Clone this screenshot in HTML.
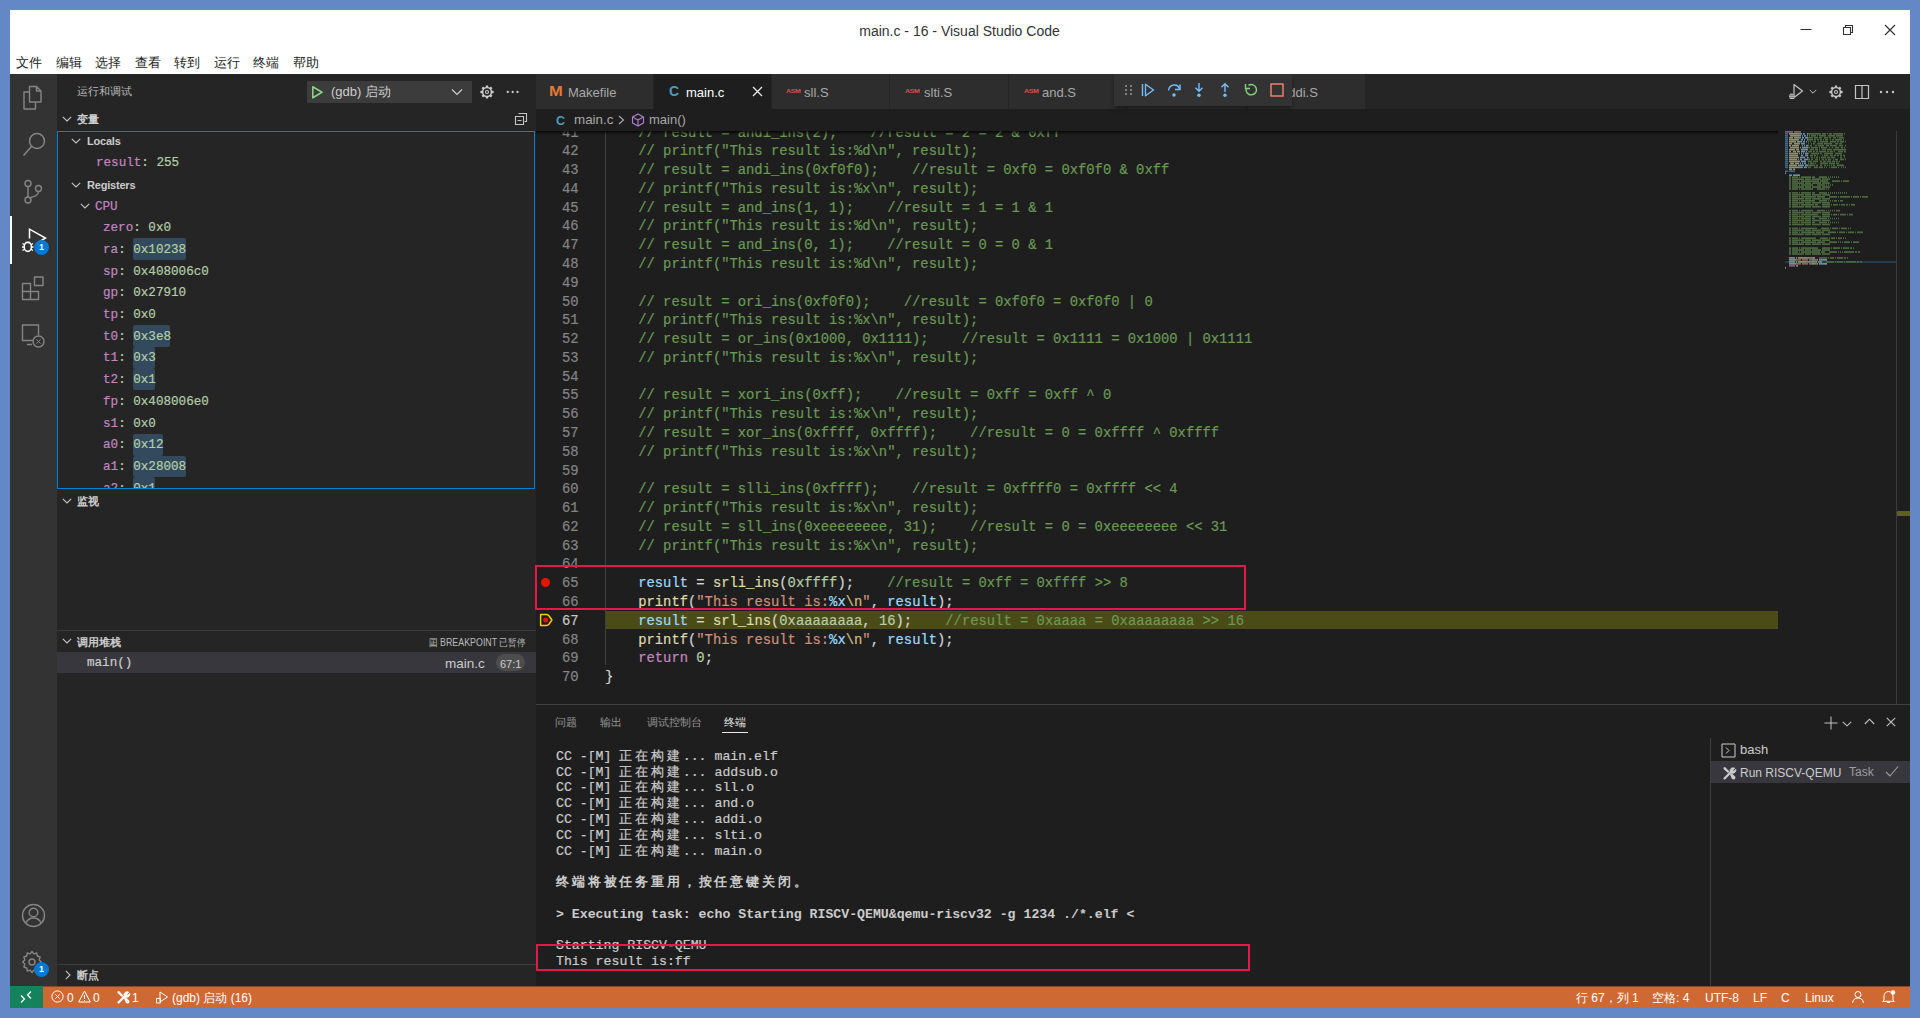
<!DOCTYPE html><html><head><meta charset="utf-8"><style>
*{box-sizing:border-box;margin:0;padding:0}
html,body{width:1920px;height:1018px;overflow:hidden}
body{background:#6388c5;font-family:"Liberation Sans",sans-serif;position:relative}
.a{position:absolute}
.ui{font-family:"Liberation Sans",sans-serif}
.mono{font-family:"Liberation Mono",monospace;-webkit-text-stroke:0.2px currentColor}
.nw{white-space:pre}
svg{display:block;overflow:visible}
</style></head><body><div class="a" style="left:10px;top:10px;width:1900px;height:64px;background:#ffffff"></div>
<div class="a ui nw" style="left:0;top:21.5px;width:1919px;text-align:center;font-size:14px;color:#333;line-height:18px">main.c - 16 - Visual Studio Code</div>
<svg class="a" style="left:1800px;top:24px" width="12" height="12"><path d="M0.5 5.5H11.5" stroke="#333" stroke-width="1.1"/></svg>
<svg class="a" style="left:1842px;top:24px" width="12" height="12"><path d="M1.5 3.5h7v7h-7z M3.5 3.5v-2h7v7h-2" fill="none" stroke="#333" stroke-width="1.1"/></svg>
<svg class="a" style="left:1884px;top:24px" width="12" height="12"><path d="M1 1L11 11M11 1L1 11" stroke="#333" stroke-width="1.2"/></svg>
<div class="a ui nw" style="left:16.3px;top:55px;font-size:13.4px;line-height:16px;color:#222">文件</div>
<div class="a ui nw" style="left:55.8px;top:55px;font-size:13.4px;line-height:16px;color:#222">编辑</div>
<div class="a ui nw" style="left:95.3px;top:55px;font-size:13.4px;line-height:16px;color:#222">选择</div>
<div class="a ui nw" style="left:134.8px;top:55px;font-size:13.4px;line-height:16px;color:#222">查看</div>
<div class="a ui nw" style="left:174.3px;top:55px;font-size:13.4px;line-height:16px;color:#222">转到</div>
<div class="a ui nw" style="left:213.8px;top:55px;font-size:13.4px;line-height:16px;color:#222">运行</div>
<div class="a ui nw" style="left:253.3px;top:55px;font-size:13.4px;line-height:16px;color:#222">终端</div>
<div class="a ui nw" style="left:292.8px;top:55px;font-size:13.4px;line-height:16px;color:#222">帮助</div>
<div class="a" style="left:10px;top:74px;width:47px;height:912px;background:#333333"></div>
<div class="a" style="left:10px;top:216px;width:2px;height:48px;background:#ffffff"></div>
<div class="a" style="left:57px;top:74px;width:479px;height:912px;background:#252526"></div>
<div class="a ui nw" style="left:77px;top:84px;font-size:11px;line-height:14px;color:#bbbbbb">运行和调试</div>
<div class="a" style="left:307px;top:81px;width:165px;height:22px;background:#3c3c3c"></div>
<svg class="a" style="left:310px;top:84px" width="14" height="16"><path d="M2.8 2.8L12 8.3L2.8 13.8Z" fill="none" stroke="#89d185" stroke-width="1.6" stroke-linejoin="round"/></svg>
<div class="a ui nw" style="left:331px;top:84px;font-size:13px;line-height:16px;color:#cccccc">(gdb) 启动</div>
<svg class="a" style="left:451px;top:88px" width="12" height="8"><path d="M1 1.5L6 6.5L11 1.5" fill="none" stroke="#cccccc" stroke-width="1.2"/></svg>
<svg class="a" style="left:479.2px;top:84px" width="16" height="16"><circle cx="8" cy="8" r="4.4" fill="none" stroke="#cccccc" stroke-width="1.5"/><path d="M12.60 8.00L14.60 8.00 M11.25 11.25L12.67 12.67 M8.00 12.60L8.00 14.60 M4.75 11.25L3.33 12.67 M3.40 8.00L1.40 8.00 M4.75 4.75L3.33 3.33 M8.00 3.40L8.00 1.40 M11.25 4.75L12.67 3.33" stroke="#cccccc" stroke-width="2.3"/><circle cx="8" cy="8" r="1.5" fill="none" stroke="#cccccc" stroke-width="1.1"/></svg>
<svg class="a" style="left:505px;top:90px" width="16" height="4"><circle cx="2.8" cy="2" r="1.15" fill="#ccc"/><circle cx="7.7" cy="2" r="1.15" fill="#ccc"/><circle cx="12.5" cy="2" r="1.15" fill="#ccc"/></svg>
<svg class="a" style="left:62px;top:116px" width="10" height="6"><path d="M0.8 0.8L5 5L9.2 0.8" fill="none" stroke="#c5c5c5" stroke-width="1.1"/></svg>
<div class="a ui nw" style="left:77px;top:112px;font-size:11px;line-height:14px;color:#cccccc;font-weight:bold">变量</div>
<svg class="a" style="left:514px;top:112px" width="14" height="14"><path d="M4.5 1.5h8v8h-2 M1.5 4.5h8v8h-8z M3.5 8.5h4" fill="none" stroke="#c5c5c5" stroke-width="1.1"/></svg>
<div class="a" style="left:57px;top:131px;width:478px;height:358px;border:1px solid #007fd4"></div>
<svg class="a" style="left:71px;top:138px" width="10" height="6"><path d="M0.8 0.8L5 5L9.2 0.8" fill="none" stroke="#c5c5c5" stroke-width="1.1"/></svg>
<div class="a ui nw" style="left:87px;top:134px;font-size:11px;letter-spacing:-0.2px;line-height:14px;color:#cccccc;font-weight:bold">Locals</div>
<div class="a mono nw" style="left:96px;top:156px;font-size:12.6px;line-height:15px;color:#b5cea8"><span style="color:#c586c0">result</span>: 255</div>
<svg class="a" style="left:71px;top:182px" width="10" height="6"><path d="M0.8 0.8L5 5L9.2 0.8" fill="none" stroke="#c5c5c5" stroke-width="1.1"/></svg>
<div class="a ui nw" style="left:87px;top:177.5px;font-size:11px;letter-spacing:-0.2px;line-height:14px;color:#cccccc;font-weight:bold">Registers</div>
<svg class="a" style="left:80px;top:203px" width="10" height="6"><path d="M0.8 0.8L5 5L9.2 0.8" fill="none" stroke="#c5c5c5" stroke-width="1.1"/></svg>
<div class="a mono nw" style="left:95px;top:199.5px;font-size:12.6px;line-height:15px;color:#c586c0">CPU</div>
<div class="a" style="left:58px;top:131px;width:476px;height:357px;overflow:hidden">
<div class="a mono nw" style="left:45px;top:90.0px;font-size:12.6px;line-height:15px;color:#b5cea8"><span style="color:#c586c0">zero</span>: 0x0</div>
<div class="a" style="left:74.7px;top:107.2px;width:52.9px;height:21.8px;background:#33495d;border-radius:2px"></div>
<div class="a mono nw" style="left:45px;top:111.7px;font-size:12.6px;line-height:15px;color:#b5cea8"><span style="color:#c586c0">ra</span>: 0x10238</div>
<div class="a mono nw" style="left:45px;top:133.5px;font-size:12.6px;line-height:15px;color:#b5cea8"><span style="color:#c586c0">sp</span>: 0x408006c0</div>
<div class="a mono nw" style="left:45px;top:155.2px;font-size:12.6px;line-height:15px;color:#b5cea8"><span style="color:#c586c0">gp</span>: 0x27910</div>
<div class="a mono nw" style="left:45px;top:176.9px;font-size:12.6px;line-height:15px;color:#b5cea8"><span style="color:#c586c0">tp</span>: 0x0</div>
<div class="a" style="left:74.7px;top:194.1px;width:37.8px;height:21.8px;background:#33495d;border-radius:2px"></div>
<div class="a mono nw" style="left:45px;top:198.6px;font-size:12.6px;line-height:15px;color:#b5cea8"><span style="color:#c586c0">t0</span>: 0x3e8</div>
<div class="a" style="left:74.7px;top:215.9px;width:22.7px;height:21.8px;background:#33495d;border-radius:2px"></div>
<div class="a mono nw" style="left:45px;top:220.4px;font-size:12.6px;line-height:15px;color:#b5cea8"><span style="color:#c586c0">t1</span>: 0x3</div>
<div class="a" style="left:74.7px;top:237.6px;width:22.7px;height:21.8px;background:#33495d;border-radius:2px"></div>
<div class="a mono nw" style="left:45px;top:242.1px;font-size:12.6px;line-height:15px;color:#b5cea8"><span style="color:#c586c0">t2</span>: 0x1</div>
<div class="a mono nw" style="left:45px;top:263.8px;font-size:12.6px;line-height:15px;color:#b5cea8"><span style="color:#c586c0">fp</span>: 0x408006e0</div>
<div class="a mono nw" style="left:45px;top:285.6px;font-size:12.6px;line-height:15px;color:#b5cea8"><span style="color:#c586c0">s1</span>: 0x0</div>
<div class="a" style="left:74.7px;top:302.8px;width:30.2px;height:21.8px;background:#33495d;border-radius:2px"></div>
<div class="a mono nw" style="left:45px;top:307.3px;font-size:12.6px;line-height:15px;color:#b5cea8"><span style="color:#c586c0">a0</span>: 0x12</div>
<div class="a" style="left:74.7px;top:324.5px;width:52.9px;height:21.8px;background:#33495d;border-radius:2px"></div>
<div class="a mono nw" style="left:45px;top:329.0px;font-size:12.6px;line-height:15px;color:#b5cea8"><span style="color:#c586c0">a1</span>: 0x28008</div>
<div class="a" style="left:74.7px;top:346.3px;width:22.7px;height:21.8px;background:#33495d;border-radius:2px"></div>
<div class="a mono nw" style="left:45px;top:350.8px;font-size:12.6px;line-height:15px;color:#b5cea8"><span style="color:#c586c0">a2</span>: 0x1</div>
</div>
<svg class="a" style="left:62px;top:498px" width="10" height="6"><path d="M0.8 0.8L5 5L9.2 0.8" fill="none" stroke="#c5c5c5" stroke-width="1.1"/></svg>
<div class="a ui nw" style="left:77px;top:494px;font-size:11px;line-height:14px;color:#cccccc;font-weight:bold">监视</div>
<div class="a" style="left:57px;top:630px;width:479px;height:1px;background:#3c3c3c"></div>
<svg class="a" style="left:62px;top:638px" width="10" height="6"><path d="M0.8 0.8L5 5L9.2 0.8" fill="none" stroke="#c5c5c5" stroke-width="1.1"/></svg>
<div class="a ui nw" style="left:77px;top:634.7px;font-size:11px;line-height:14px;color:#cccccc;font-weight:bold">调用堆栈</div>
<div class="a ui nw" style="left:429px;top:635.5px;font-size:10.3px;line-height:13px;color:#bbbbbb;transform:scaleX(0.86);transform-origin:0 0">囸 BREAKPOINT 已暂停</div>
<div class="a" style="left:57px;top:652px;width:479px;height:21px;background:#37373d"></div>
<div class="a mono nw" style="left:87px;top:655.7px;font-size:12.6px;line-height:15px;color:#cccccc">main()</div>
<div class="a ui nw" style="left:445px;top:655.5px;font-size:13.5px;line-height:15px;color:#cccccc">main.c</div>
<div class="a" style="left:496px;top:654px;width:29px;height:17px;border-radius:9px;background:#4d4d4d"></div>
<div class="a ui nw" style="left:500px;top:656.7px;font-size:11px;line-height:14px;color:#cccccc">67:1</div>
<div class="a" style="left:57px;top:964px;width:479px;height:1px;background:#3c3c3c"></div>
<svg class="a" style="left:65px;top:970px" width="6" height="10"><path d="M0.8 0.8L5 5L0.8 9.2" fill="none" stroke="#c5c5c5" stroke-width="1.1"/></svg>
<div class="a ui nw" style="left:77px;top:968px;font-size:11px;line-height:14px;color:#cccccc;font-weight:bold">断点</div>
<div class="a" style="left:536px;top:74px;width:1374px;height:35px;background:#252526"></div>
<div class="a" style="left:536px;top:109px;width:1374px;height:595px;background:#1e1e1e"></div>
<div class="a" style="left:536px;top:74px;width:118px;height:35px;background:#2d2d2d;border-right:1px solid #252526"></div>
<div class="a" style="left:654px;top:74px;width:118px;height:35px;background:#1e1e1e;border-right:1px solid #252526"></div>
<div class="a" style="left:772px;top:74px;width:118px;height:35px;background:#2d2d2d;border-right:1px solid #252526"></div>
<div class="a" style="left:890px;top:74px;width:119px;height:35px;background:#2d2d2d;border-right:1px solid #252526"></div>
<div class="a" style="left:1009px;top:74px;width:118px;height:35px;background:#2d2d2d;border-right:1px solid #252526"></div>
<div class="a" style="left:1127px;top:74px;width:121px;height:35px;background:#2d2d2d;border-right:1px solid #252526"></div>
<div class="a" style="left:1248px;top:74px;width:118px;height:35px;background:#2d2d2d;border-right:1px solid #252526"></div>
<div class="a ui nw" style="left:548.5px;top:82px;font-size:15px;line-height:17px;color:#e37933;font-weight:bold;transform:scaleX(1.1);transform-origin:0 0">M</div>
<div class="a ui nw" style="left:568px;top:85px;font-size:13px;line-height:16px;color:#a9a9a9">Makefile</div>
<div class="a ui nw" style="left:669px;top:83px;font-size:14px;line-height:17px;color:#519aba;font-weight:bold">C</div>
<div class="a ui nw" style="left:686px;top:85px;font-size:13px;line-height:16px;color:#ffffff">main.c</div>
<svg class="a" style="left:752px;top:86px" width="11" height="11"><path d="M1 1L10 10M10 1L1 10" stroke="#e8e8e8" stroke-width="1.3"/></svg>
<div class="a ui nw" style="left:786px;top:87px;font-size:7px;line-height:8px;color:#e34c4c;font-weight:bold;letter-spacing:-0.3px;transform:scaleY(0.8)">ASM</div>
<div class="a ui nw" style="left:804px;top:85px;font-size:13px;line-height:16px;color:#a9a9a9">sll.S</div>
<div class="a ui nw" style="left:905px;top:87px;font-size:7px;line-height:8px;color:#e34c4c;font-weight:bold;letter-spacing:-0.3px;transform:scaleY(0.8)">ASM</div>
<div class="a ui nw" style="left:924px;top:85px;font-size:13px;line-height:16px;color:#a9a9a9">slti.S</div>
<div class="a ui nw" style="left:1024px;top:87px;font-size:7px;line-height:8px;color:#e34c4c;font-weight:bold;letter-spacing:-0.3px;transform:scaleY(0.8)">ASM</div>
<div class="a ui nw" style="left:1042px;top:85px;font-size:13px;line-height:16px;color:#a9a9a9">and.S</div>
<div class="a ui nw" style="left:1264px;top:87px;font-size:7px;line-height:8px;color:#e34c4c;font-weight:bold;letter-spacing:-0.3px;transform:scaleY(0.8)">ASM</div>
<div class="a ui nw" style="left:1281px;top:85px;font-size:13px;line-height:16px;color:#a9a9a9">addi.S</div>
<div class="a" style="left:1114px;top:74px;width:178px;height:32px;background:#333333;box-shadow:0 3px 4px -1px rgba(0,0,0,0.5)"></div>
<svg class="a" style="left:1124px;top:84px" width="10" height="12"><g fill="#9a9a9a"><circle cx="2" cy="2" r="1"/><circle cx="7" cy="2" r="1"/><circle cx="2" cy="6" r="1"/><circle cx="7" cy="6" r="1"/><circle cx="2" cy="10" r="1"/><circle cx="7" cy="10" r="1"/></g></svg>
<svg class="a" style="left:1140px;top:82px" width="16" height="16"><path d="M2.5 2v12" stroke="#75beff" stroke-width="1.4"/><path d="M5.5 2.2L13.5 8L5.5 13.8Z" fill="none" stroke="#75beff" stroke-width="1.3" stroke-linejoin="round"/></svg>
<svg class="a" style="left:1166px;top:82px" width="16" height="16"><path d="M2.5 8.5C3 4.5 6 3 8.5 3S13 4.5 13.5 7.5" fill="none" stroke="#75beff" stroke-width="1.4"/><path d="M14 2.5v5h-5" fill="none" stroke="#75beff" stroke-width="1.4"/><circle cx="8" cy="13" r="1.7" fill="#75beff"/></svg>
<svg class="a" style="left:1191px;top:82px" width="16" height="16"><path d="M8 1v8M4.5 5.8L8 9.3l3.5-3.5" fill="none" stroke="#75beff" stroke-width="1.4"/><circle cx="8" cy="13.3" r="1.7" fill="#75beff"/></svg>
<svg class="a" style="left:1217px;top:82px" width="16" height="16"><path d="M8 10V1.8M4.5 5.2L8 1.7l3.5 3.5" fill="none" stroke="#75beff" stroke-width="1.4"/><circle cx="8" cy="13.3" r="1.7" fill="#75beff"/></svg>
<svg class="a" style="left:1243px;top:82px" width="16" height="16"><path d="M3.2 6.5A5.2 5.2 0 1 0 5.5 3.3" fill="none" stroke="#89d185" stroke-width="1.4"/><path d="M2.5 2v4.5H7" fill="none" stroke="#89d185" stroke-width="1.4"/></svg>
<svg class="a" style="left:1269px;top:82px" width="16" height="16"><rect x="2" y="2" width="12" height="12" fill="none" stroke="#f48771" stroke-width="1.4"/></svg>
<svg class="a" style="left:1787px;top:82px" width="20" height="20"><path d="M7 2.5L15.5 9L7 15.5Z" fill="none" stroke="#c5c5c5" stroke-width="1.2" stroke-linejoin="round"/><circle cx="5" cy="14" r="2.8" fill="#252526"/><path d="M3 12.2h4v4.3h-4z M2 14.3h6 M5 12.2v4.3" fill="none" stroke="#c5c5c5" stroke-width="1"/></svg>
<svg class="a" style="left:1809px;top:89px" width="8" height="6"><path d="M0.8 1L4 4.2L7.2 1" fill="none" stroke="#c5c5c5" stroke-width="1"/></svg>
<svg class="a" style="left:1828px;top:83.8px" width="16" height="16"><circle cx="8" cy="8" r="4.4" fill="none" stroke="#c5c5c5" stroke-width="1.5"/><path d="M12.60 8.00L14.60 8.00 M11.25 11.25L12.67 12.67 M8.00 12.60L8.00 14.60 M4.75 11.25L3.33 12.67 M3.40 8.00L1.40 8.00 M4.75 4.75L3.33 3.33 M8.00 3.40L8.00 1.40 M11.25 4.75L12.67 3.33" stroke="#c5c5c5" stroke-width="2.3"/><circle cx="8" cy="8" r="1.5" fill="none" stroke="#c5c5c5" stroke-width="1.1"/></svg>
<svg class="a" style="left:1854px;top:84px" width="16" height="16"><path d="M1.5 1.5h13v13h-13z M8 1.5v13" fill="none" stroke="#c5c5c5" stroke-width="1.2"/></svg>
<svg class="a" style="left:1879px;top:90px" width="16" height="4"><circle cx="2" cy="2" r="1.2" fill="#c5c5c5"/><circle cx="8" cy="2" r="1.2" fill="#c5c5c5"/><circle cx="14" cy="2" r="1.2" fill="#c5c5c5"/></svg>
<div class="a ui nw" style="left:556px;top:113.5px;font-size:12.5px;line-height:15px;color:#519aba;font-weight:bold">C</div>
<div class="a ui nw" style="left:574px;top:112px;font-size:13.4px;line-height:15px;color:#a9a9a9">main.c</div>
<svg class="a" style="left:618px;top:115px" width="7" height="10"><path d="M1 1L5.5 5L1 9" fill="none" stroke="#a9a9a9" stroke-width="1.1"/></svg>
<svg class="a" style="left:631px;top:113px" width="14" height="14"><path d="M7 1L12.5 4v6L7 13L1.5 10V4Z M1.5 4L7 7l5.5-3 M7 7v6" fill="none" stroke="#b180d7" stroke-width="1.1" stroke-linejoin="round"/></svg>
<div class="a ui nw" style="left:649px;top:112px;font-size:13px;line-height:15px;color:#a9a9a9">main()</div>
<div class="a" style="left:536px;top:131px;width:1374px;height:573px;overflow:hidden">
<div class="a" style="left:69.0px;top:480px;width:1173px;height:18px;background:#4b4b18"></div>
<div class="a" style="left:69.0px;top:0px;width:1px;height:534.3px;background:#404040"></div>
<div class="a mono nw" style="left:4px;width:38.5px;text-align:right;top:-7.48px;font-size:13.84px;line-height:18px;color:#858585">41</div>
<div class="a mono nw" style="left:69.0px;top:-7.48px;font-size:13.84px;line-height:18px;color:#d4d4d4"><span style="color:#6a9955">    // result = andi_ins(2);    //result = 2 = 2 &amp; 0xff</span></div>
<div class="a mono nw" style="left:4px;width:38.5px;text-align:right;top:11.30px;font-size:13.84px;line-height:18px;color:#858585">42</div>
<div class="a mono nw" style="left:69.0px;top:11.30px;font-size:13.84px;line-height:18px;color:#d4d4d4"><span style="color:#6a9955">    // printf("This result is:%d\n", result);</span></div>
<div class="a mono nw" style="left:4px;width:38.5px;text-align:right;top:30.08px;font-size:13.84px;line-height:18px;color:#858585">43</div>
<div class="a mono nw" style="left:69.0px;top:30.08px;font-size:13.84px;line-height:18px;color:#d4d4d4"><span style="color:#6a9955">    // result = andi_ins(0xf0f0);    //result = 0xf0 = 0xf0f0 &amp; 0xff</span></div>
<div class="a mono nw" style="left:4px;width:38.5px;text-align:right;top:48.86px;font-size:13.84px;line-height:18px;color:#858585">44</div>
<div class="a mono nw" style="left:69.0px;top:48.86px;font-size:13.84px;line-height:18px;color:#d4d4d4"><span style="color:#6a9955">    // printf("This result is:%x\n", result);</span></div>
<div class="a mono nw" style="left:4px;width:38.5px;text-align:right;top:67.64px;font-size:13.84px;line-height:18px;color:#858585">45</div>
<div class="a mono nw" style="left:69.0px;top:67.64px;font-size:13.84px;line-height:18px;color:#d4d4d4"><span style="color:#6a9955">    // result = and_ins(1, 1);    //result = 1 = 1 &amp; 1</span></div>
<div class="a mono nw" style="left:4px;width:38.5px;text-align:right;top:86.42px;font-size:13.84px;line-height:18px;color:#858585">46</div>
<div class="a mono nw" style="left:69.0px;top:86.42px;font-size:13.84px;line-height:18px;color:#d4d4d4"><span style="color:#6a9955">    // printf("This result is:%d\n", result);</span></div>
<div class="a mono nw" style="left:4px;width:38.5px;text-align:right;top:105.20px;font-size:13.84px;line-height:18px;color:#858585">47</div>
<div class="a mono nw" style="left:69.0px;top:105.20px;font-size:13.84px;line-height:18px;color:#d4d4d4"><span style="color:#6a9955">    // result = and_ins(0, 1);    //result = 0 = 0 &amp; 1</span></div>
<div class="a mono nw" style="left:4px;width:38.5px;text-align:right;top:123.98px;font-size:13.84px;line-height:18px;color:#858585">48</div>
<div class="a mono nw" style="left:69.0px;top:123.98px;font-size:13.84px;line-height:18px;color:#d4d4d4"><span style="color:#6a9955">    // printf("This result is:%d\n", result);</span></div>
<div class="a mono nw" style="left:4px;width:38.5px;text-align:right;top:142.76px;font-size:13.84px;line-height:18px;color:#858585">49</div>
<div class="a mono nw" style="left:4px;width:38.5px;text-align:right;top:161.54px;font-size:13.84px;line-height:18px;color:#858585">50</div>
<div class="a mono nw" style="left:69.0px;top:161.54px;font-size:13.84px;line-height:18px;color:#d4d4d4"><span style="color:#6a9955">    // result = ori_ins(0xf0f0);    //result = 0xf0f0 = 0xf0f0 | 0</span></div>
<div class="a mono nw" style="left:4px;width:38.5px;text-align:right;top:180.32px;font-size:13.84px;line-height:18px;color:#858585">51</div>
<div class="a mono nw" style="left:69.0px;top:180.32px;font-size:13.84px;line-height:18px;color:#d4d4d4"><span style="color:#6a9955">    // printf("This result is:%x\n", result);</span></div>
<div class="a mono nw" style="left:4px;width:38.5px;text-align:right;top:199.10px;font-size:13.84px;line-height:18px;color:#858585">52</div>
<div class="a mono nw" style="left:69.0px;top:199.10px;font-size:13.84px;line-height:18px;color:#d4d4d4"><span style="color:#6a9955">    // result = or_ins(0x1000, 0x1111);    //result = 0x1111 = 0x1000 | 0x1111</span></div>
<div class="a mono nw" style="left:4px;width:38.5px;text-align:right;top:217.88px;font-size:13.84px;line-height:18px;color:#858585">53</div>
<div class="a mono nw" style="left:69.0px;top:217.88px;font-size:13.84px;line-height:18px;color:#d4d4d4"><span style="color:#6a9955">    // printf("This result is:%x\n", result);</span></div>
<div class="a mono nw" style="left:4px;width:38.5px;text-align:right;top:236.66px;font-size:13.84px;line-height:18px;color:#858585">54</div>
<div class="a mono nw" style="left:4px;width:38.5px;text-align:right;top:255.44px;font-size:13.84px;line-height:18px;color:#858585">55</div>
<div class="a mono nw" style="left:69.0px;top:255.44px;font-size:13.84px;line-height:18px;color:#d4d4d4"><span style="color:#6a9955">    // result = xori_ins(0xff);    //result = 0xff = 0xff ^ 0</span></div>
<div class="a mono nw" style="left:4px;width:38.5px;text-align:right;top:274.22px;font-size:13.84px;line-height:18px;color:#858585">56</div>
<div class="a mono nw" style="left:69.0px;top:274.22px;font-size:13.84px;line-height:18px;color:#d4d4d4"><span style="color:#6a9955">    // printf("This result is:%x\n", result);</span></div>
<div class="a mono nw" style="left:4px;width:38.5px;text-align:right;top:293.00px;font-size:13.84px;line-height:18px;color:#858585">57</div>
<div class="a mono nw" style="left:69.0px;top:293.00px;font-size:13.84px;line-height:18px;color:#d4d4d4"><span style="color:#6a9955">    // result = xor_ins(0xffff, 0xffff);    //result = 0 = 0xffff ^ 0xffff</span></div>
<div class="a mono nw" style="left:4px;width:38.5px;text-align:right;top:311.78px;font-size:13.84px;line-height:18px;color:#858585">58</div>
<div class="a mono nw" style="left:69.0px;top:311.78px;font-size:13.84px;line-height:18px;color:#d4d4d4"><span style="color:#6a9955">    // printf("This result is:%x\n", result);</span></div>
<div class="a mono nw" style="left:4px;width:38.5px;text-align:right;top:330.56px;font-size:13.84px;line-height:18px;color:#858585">59</div>
<div class="a mono nw" style="left:4px;width:38.5px;text-align:right;top:349.34px;font-size:13.84px;line-height:18px;color:#858585">60</div>
<div class="a mono nw" style="left:69.0px;top:349.34px;font-size:13.84px;line-height:18px;color:#d4d4d4"><span style="color:#6a9955">    // result = slli_ins(0xffff);    //result = 0xffff0 = 0xffff &lt;&lt; 4</span></div>
<div class="a mono nw" style="left:4px;width:38.5px;text-align:right;top:368.12px;font-size:13.84px;line-height:18px;color:#858585">61</div>
<div class="a mono nw" style="left:69.0px;top:368.12px;font-size:13.84px;line-height:18px;color:#d4d4d4"><span style="color:#6a9955">    // printf("This result is:%x\n", result);</span></div>
<div class="a mono nw" style="left:4px;width:38.5px;text-align:right;top:386.90px;font-size:13.84px;line-height:18px;color:#858585">62</div>
<div class="a mono nw" style="left:69.0px;top:386.90px;font-size:13.84px;line-height:18px;color:#d4d4d4"><span style="color:#6a9955">    // result = sll_ins(0xeeeeeeee, 31);    //result = 0 = 0xeeeeeeee &lt;&lt; 31</span></div>
<div class="a mono nw" style="left:4px;width:38.5px;text-align:right;top:405.68px;font-size:13.84px;line-height:18px;color:#858585">63</div>
<div class="a mono nw" style="left:69.0px;top:405.68px;font-size:13.84px;line-height:18px;color:#d4d4d4"><span style="color:#6a9955">    // printf("This result is:%x\n", result);</span></div>
<div class="a mono nw" style="left:4px;width:38.5px;text-align:right;top:424.46px;font-size:13.84px;line-height:18px;color:#858585">64</div>
<div class="a mono nw" style="left:4px;width:38.5px;text-align:right;top:443.24px;font-size:13.84px;line-height:18px;color:#858585">65</div>
<div class="a mono nw" style="left:69.0px;top:443.24px;font-size:13.84px;line-height:18px;color:#d4d4d4">    <span style="color:#9cdcfe">result</span><span style="color:#d4d4d4"> = </span><span style="color:#dcdcaa">srli_ins</span><span style="color:#d4d4d4">(</span><span style="color:#b5cea8">0xffff</span><span style="color:#d4d4d4">);</span><span style="color:#6a9955">    //result = 0xff = 0xffff &gt;&gt; 8</span></div>
<div class="a mono nw" style="left:4px;width:38.5px;text-align:right;top:462.02px;font-size:13.84px;line-height:18px;color:#858585">66</div>
<div class="a mono nw" style="left:69.0px;top:462.02px;font-size:13.84px;line-height:18px;color:#d4d4d4">    <span style="color:#dcdcaa">printf</span><span style="color:#d4d4d4">(</span><span style="color:#ce9178">"This result is:</span><span style="color:#9cdcfe">%x</span><span style="color:#d7ba7d">\n</span><span style="color:#ce9178">"</span><span style="color:#d4d4d4">, </span><span style="color:#9cdcfe">result</span><span style="color:#d4d4d4">);</span></div>
<div class="a mono nw" style="left:4px;width:38.5px;text-align:right;top:480.80px;font-size:13.84px;line-height:18px;color:#c6c6c6">67</div>
<div class="a mono nw" style="left:69.0px;top:480.80px;font-size:13.84px;line-height:18px;color:#d4d4d4">    <span style="color:#9cdcfe">result</span><span style="color:#d4d4d4"> = </span><span style="color:#dcdcaa">srl_ins</span><span style="color:#d4d4d4">(</span><span style="color:#b5cea8">0xaaaaaaaa</span><span style="color:#d4d4d4">, </span><span style="color:#b5cea8">16</span><span style="color:#d4d4d4">);</span><span style="color:#6a9955">    //result = 0xaaaa = 0xaaaaaaaa &gt;&gt; 16</span></div>
<div class="a mono nw" style="left:4px;width:38.5px;text-align:right;top:499.58px;font-size:13.84px;line-height:18px;color:#858585">68</div>
<div class="a mono nw" style="left:69.0px;top:499.58px;font-size:13.84px;line-height:18px;color:#d4d4d4">    <span style="color:#dcdcaa">printf</span><span style="color:#d4d4d4">(</span><span style="color:#ce9178">"This result is:</span><span style="color:#9cdcfe">%x</span><span style="color:#d7ba7d">\n</span><span style="color:#ce9178">"</span><span style="color:#d4d4d4">, </span><span style="color:#9cdcfe">result</span><span style="color:#d4d4d4">);</span></div>
<div class="a mono nw" style="left:4px;width:38.5px;text-align:right;top:518.36px;font-size:13.84px;line-height:18px;color:#858585">69</div>
<div class="a mono nw" style="left:69.0px;top:518.36px;font-size:13.84px;line-height:18px;color:#d4d4d4">    <span style="color:#c586c0">return</span><span style="color:#d4d4d4"> </span><span style="color:#b5cea8">0</span><span style="color:#d4d4d4">;</span></div>
<div class="a mono nw" style="left:4px;width:38.5px;text-align:right;top:537.14px;font-size:13.84px;line-height:18px;color:#858585">70</div>
<div class="a mono nw" style="left:69.0px;top:537.14px;font-size:13.84px;line-height:18px;color:#d4d4d4"><span style="color:#d4d4d4">}</span></div>
<div class="a" style="left:4.5px;top:446.7px;width:9px;height:9px;border-radius:50%;background:#e51400"></div>
<svg class="a" style="left:2.5px;top:482px" width="14" height="14"><path d="M1.6 1.6h5.8c1.2 0 1.8.4 2.5 1.2l3 4.2-3 4.2c-.7.8-1.3 1.2-2.5 1.2H1.6z" fill="none" stroke="#ffcc00" stroke-width="1.5" stroke-linejoin="round"/><circle cx="6.7" cy="7" r="2.5" fill="#e51400"/></svg>
</div>
<div class="a" style="left:536px;top:131px;width:1242px;height:4px;background:linear-gradient(rgba(0,0,0,0.75),rgba(0,0,0,0))"></div>
<div class="a" style="left:1896px;top:131px;width:1px;height:573px;background:#3a3a3a"></div>
<div class="a" style="left:1897px;top:511px;width:13px;height:5px;background:#5f5f1e"></div>
<div class="a" style="left:536px;top:704px;width:1374px;height:282px;background:#1e1e1e;border-top:1px solid #414141"></div>
<div class="a" style="left:10px;top:986px;width:1900px;height:22px;background:#cf6934"></div>
<div class="a" style="left:10px;top:986px;width:33px;height:22px;background:#16825d"></div>
<div class="a" style="left:43px;top:986px;width:1867px;height:1px;background:#8a4a2a"></div>
<svg class="a" style="left:1785px;top:131px" width="111" height="150"><g opacity="0.6"><rect x="0" y="130.02" width="111" height="2" fill="#2a5075"/><rect x="0" y="126.08" width="60" height="1.5" fill="#5a1d1d"/><rect x="0" y="0.00" width="8" height="1.7" fill="#c586c0"/><rect x="9" y="0.00" width="7" height="1.7" fill="#ce9178"/><rect x="0" y="1.97" width="3" height="1.7" fill="#569cd6"/><rect x="4" y="1.97" width="10" height="1.7" fill="#dcdcaa"/><rect x="14" y="1.97" width="3" height="1.7" fill="#9cdcfe"/><rect x="18" y="1.97" width="2" height="1.7" fill="#9cdcfe"/><rect x="22" y="1.97" width="1" height="1.7" fill="#9cdcfe"/><rect x="23" y="1.97" width="13" height="1.7" fill="#6a9955"/><rect x="37" y="1.97" width="4" height="1.7" fill="#6a9955"/><rect x="42" y="1.97" width="1" height="1.7" fill="#6a9955"/><rect x="44" y="1.97" width="3" height="1.7" fill="#6a9955"/><rect x="48" y="1.97" width="10" height="1.7" fill="#6a9955"/><rect x="59" y="1.97" width="1" height="1.7" fill="#6a9955"/><rect x="0" y="3.94" width="3" height="1.7" fill="#569cd6"/><rect x="5" y="3.94" width="9" height="1.7" fill="#dcdcaa"/><rect x="14" y="3.94" width="2" height="1.7" fill="#9cdcfe"/><rect x="17" y="3.94" width="1" height="1.7" fill="#9cdcfe"/><rect x="19" y="3.94" width="2" height="1.7" fill="#9cdcfe"/><rect x="22" y="3.94" width="1" height="1.7" fill="#9cdcfe"/><rect x="24" y="3.94" width="1" height="1.7" fill="#6a9955"/><rect x="26" y="3.94" width="5" height="1.7" fill="#6a9955"/><rect x="32" y="3.94" width="1" height="1.7" fill="#6a9955"/><rect x="34" y="3.94" width="7" height="1.7" fill="#6a9955"/><rect x="43" y="3.94" width="7" height="1.7" fill="#6a9955"/><rect x="51" y="3.94" width="7" height="1.7" fill="#6a9955"/><rect x="0" y="5.91" width="3" height="1.7" fill="#569cd6"/><rect x="4" y="5.91" width="4" height="1.7" fill="#dcdcaa"/><rect x="9" y="5.91" width="5" height="1.7" fill="#dcdcaa"/><rect x="14" y="5.91" width="2" height="1.7" fill="#9cdcfe"/><rect x="17" y="5.91" width="2" height="1.7" fill="#9cdcfe"/><rect x="20" y="5.91" width="3" height="1.7" fill="#9cdcfe"/><rect x="23" y="5.91" width="5" height="1.7" fill="#6a9955"/><rect x="29" y="5.91" width="4" height="1.7" fill="#6a9955"/><rect x="34" y="5.91" width="3" height="1.7" fill="#6a9955"/><rect x="39" y="5.91" width="4" height="1.7" fill="#6a9955"/><rect x="44" y="5.91" width="2" height="1.7" fill="#6a9955"/><rect x="48" y="5.91" width="3" height="1.7" fill="#6a9955"/><rect x="52" y="5.91" width="1" height="1.7" fill="#6a9955"/><rect x="54" y="5.91" width="5" height="1.7" fill="#6a9955"/><rect x="0" y="7.88" width="3" height="1.7" fill="#569cd6"/><rect x="4" y="7.88" width="10" height="1.7" fill="#dcdcaa"/><rect x="16" y="7.88" width="2" height="1.7" fill="#9cdcfe"/><rect x="19" y="7.88" width="1" height="1.7" fill="#9cdcfe"/><rect x="22" y="7.88" width="1" height="1.7" fill="#9cdcfe"/><rect x="23" y="7.88" width="5" height="1.7" fill="#6a9955"/><rect x="29" y="7.88" width="2" height="1.7" fill="#6a9955"/><rect x="32" y="7.88" width="2" height="1.7" fill="#6a9955"/><rect x="35" y="7.88" width="2" height="1.7" fill="#6a9955"/><rect x="38" y="7.88" width="1" height="1.7" fill="#6a9955"/><rect x="40" y="7.88" width="3" height="1.7" fill="#6a9955"/><rect x="45" y="7.88" width="1" height="1.7" fill="#6a9955"/><rect x="47" y="7.88" width="2" height="1.7" fill="#6a9955"/><rect x="50" y="7.88" width="7" height="1.7" fill="#6a9955"/><rect x="58" y="7.88" width="1" height="1.7" fill="#6a9955"/><rect x="0" y="9.85" width="3" height="1.7" fill="#569cd6"/><rect x="4" y="9.85" width="7" height="1.7" fill="#dcdcaa"/><rect x="12" y="9.85" width="2" height="1.7" fill="#dcdcaa"/><rect x="14" y="9.85" width="3" height="1.7" fill="#9cdcfe"/><rect x="18" y="9.85" width="2" height="1.7" fill="#9cdcfe"/><rect x="21" y="9.85" width="1" height="1.7" fill="#9cdcfe"/><rect x="23" y="9.85" width="1" height="1.7" fill="#6a9955"/><rect x="25" y="9.85" width="1" height="1.7" fill="#6a9955"/><rect x="28" y="9.85" width="3" height="1.7" fill="#6a9955"/><rect x="33" y="9.85" width="1" height="1.7" fill="#6a9955"/><rect x="35" y="9.85" width="8" height="1.7" fill="#6a9955"/><rect x="45" y="9.85" width="6" height="1.7" fill="#6a9955"/><rect x="52" y="9.85" width="2" height="1.7" fill="#6a9955"/><rect x="55" y="9.85" width="4" height="1.7" fill="#6a9955"/><rect x="60" y="9.85" width="1" height="1.7" fill="#6a9955"/><rect x="0" y="11.82" width="3" height="1.7" fill="#569cd6"/><rect x="4" y="11.82" width="3" height="1.7" fill="#dcdcaa"/><rect x="9" y="11.82" width="5" height="1.7" fill="#dcdcaa"/><rect x="14" y="11.82" width="1" height="1.7" fill="#9cdcfe"/><rect x="16" y="11.82" width="4" height="1.7" fill="#9cdcfe"/><rect x="23" y="11.82" width="1" height="1.7" fill="#6a9955"/><rect x="26" y="11.82" width="1" height="1.7" fill="#6a9955"/><rect x="28" y="11.82" width="2" height="1.7" fill="#6a9955"/><rect x="32" y="11.82" width="6" height="1.7" fill="#6a9955"/><rect x="39" y="11.82" width="8" height="1.7" fill="#6a9955"/><rect x="50" y="11.82" width="3" height="1.7" fill="#6a9955"/><rect x="54" y="11.82" width="3" height="1.7" fill="#6a9955"/><rect x="0" y="13.79" width="3" height="1.7" fill="#569cd6"/><rect x="4" y="13.79" width="2" height="1.7" fill="#dcdcaa"/><rect x="7" y="13.79" width="7" height="1.7" fill="#dcdcaa"/><rect x="17" y="13.79" width="1" height="1.7" fill="#9cdcfe"/><rect x="19" y="13.79" width="1" height="1.7" fill="#9cdcfe"/><rect x="21" y="13.79" width="2" height="1.7" fill="#9cdcfe"/><rect x="23" y="13.79" width="1" height="1.7" fill="#6a9955"/><rect x="25" y="13.79" width="2" height="1.7" fill="#6a9955"/><rect x="30" y="13.79" width="2" height="1.7" fill="#6a9955"/><rect x="33" y="13.79" width="6" height="1.7" fill="#6a9955"/><rect x="41" y="13.79" width="3" height="1.7" fill="#6a9955"/><rect x="45" y="13.79" width="7" height="1.7" fill="#6a9955"/><rect x="54" y="13.79" width="4" height="1.7" fill="#6a9955"/><rect x="60" y="13.79" width="1" height="1.7" fill="#6a9955"/><rect x="0" y="15.76" width="3" height="1.7" fill="#569cd6"/><rect x="5" y="15.76" width="9" height="1.7" fill="#dcdcaa"/><rect x="15" y="15.76" width="1" height="1.7" fill="#9cdcfe"/><rect x="17" y="15.76" width="6" height="1.7" fill="#9cdcfe"/><rect x="23" y="15.76" width="2" height="1.7" fill="#6a9955"/><rect x="26" y="15.76" width="7" height="1.7" fill="#6a9955"/><rect x="34" y="15.76" width="1" height="1.7" fill="#6a9955"/><rect x="36" y="15.76" width="6" height="1.7" fill="#6a9955"/><rect x="44" y="15.76" width="1" height="1.7" fill="#6a9955"/><rect x="47" y="15.76" width="1" height="1.7" fill="#6a9955"/><rect x="50" y="15.76" width="4" height="1.7" fill="#6a9955"/><rect x="56" y="15.76" width="2" height="1.7" fill="#6a9955"/><rect x="59" y="15.76" width="1" height="1.7" fill="#6a9955"/><rect x="0" y="17.73" width="3" height="1.7" fill="#569cd6"/><rect x="4" y="17.73" width="6" height="1.7" fill="#dcdcaa"/><rect x="11" y="17.73" width="3" height="1.7" fill="#dcdcaa"/><rect x="16" y="17.73" width="7" height="1.7" fill="#9cdcfe"/><rect x="25" y="17.73" width="4" height="1.7" fill="#6a9955"/><rect x="30" y="17.73" width="3" height="1.7" fill="#6a9955"/><rect x="34" y="17.73" width="1" height="1.7" fill="#6a9955"/><rect x="37" y="17.73" width="4" height="1.7" fill="#6a9955"/><rect x="42" y="17.73" width="5" height="1.7" fill="#6a9955"/><rect x="48" y="17.73" width="13" height="1.7" fill="#6a9955"/><rect x="0" y="19.70" width="3" height="1.7" fill="#569cd6"/><rect x="4" y="19.70" width="2" height="1.7" fill="#dcdcaa"/><rect x="8" y="19.70" width="3" height="1.7" fill="#dcdcaa"/><rect x="12" y="19.70" width="2" height="1.7" fill="#dcdcaa"/><rect x="14" y="19.70" width="1" height="1.7" fill="#9cdcfe"/><rect x="16" y="19.70" width="4" height="1.7" fill="#9cdcfe"/><rect x="21" y="19.70" width="1" height="1.7" fill="#9cdcfe"/><rect x="23" y="19.70" width="4" height="1.7" fill="#6a9955"/><rect x="28" y="19.70" width="2" height="1.7" fill="#6a9955"/><rect x="31" y="19.70" width="2" height="1.7" fill="#6a9955"/><rect x="34" y="19.70" width="7" height="1.7" fill="#6a9955"/><rect x="42" y="19.70" width="2" height="1.7" fill="#6a9955"/><rect x="45" y="19.70" width="3" height="1.7" fill="#6a9955"/><rect x="49" y="19.70" width="1" height="1.7" fill="#6a9955"/><rect x="53" y="19.70" width="5" height="1.7" fill="#6a9955"/><rect x="59" y="19.70" width="2" height="1.7" fill="#6a9955"/><rect x="0" y="21.67" width="3" height="1.7" fill="#569cd6"/><rect x="4" y="21.67" width="9" height="1.7" fill="#dcdcaa"/><rect x="14" y="21.67" width="1" height="1.7" fill="#9cdcfe"/><rect x="16" y="21.67" width="1" height="1.7" fill="#9cdcfe"/><rect x="18" y="21.67" width="1" height="1.7" fill="#9cdcfe"/><rect x="20" y="21.67" width="3" height="1.7" fill="#9cdcfe"/><rect x="23" y="21.67" width="1" height="1.7" fill="#6a9955"/><rect x="26" y="21.67" width="8" height="1.7" fill="#6a9955"/><rect x="35" y="21.67" width="2" height="1.7" fill="#6a9955"/><rect x="39" y="21.67" width="9" height="1.7" fill="#6a9955"/><rect x="50" y="21.67" width="7" height="1.7" fill="#6a9955"/><rect x="0" y="23.64" width="3" height="1.7" fill="#569cd6"/><rect x="4" y="23.64" width="9" height="1.7" fill="#dcdcaa"/><rect x="16" y="23.64" width="2" height="1.7" fill="#9cdcfe"/><rect x="20" y="23.64" width="3" height="1.7" fill="#9cdcfe"/><rect x="25" y="23.64" width="3" height="1.7" fill="#6a9955"/><rect x="29" y="23.64" width="2" height="1.7" fill="#6a9955"/><rect x="32" y="23.64" width="1" height="1.7" fill="#6a9955"/><rect x="37" y="23.64" width="1" height="1.7" fill="#6a9955"/><rect x="39" y="23.64" width="4" height="1.7" fill="#6a9955"/><rect x="45" y="23.64" width="3" height="1.7" fill="#6a9955"/><rect x="49" y="23.64" width="2" height="1.7" fill="#6a9955"/><rect x="52" y="23.64" width="2" height="1.7" fill="#6a9955"/><rect x="55" y="23.64" width="2" height="1.7" fill="#6a9955"/><rect x="58" y="23.64" width="2" height="1.7" fill="#6a9955"/><rect x="0" y="25.61" width="3" height="1.7" fill="#569cd6"/><rect x="4" y="25.61" width="10" height="1.7" fill="#dcdcaa"/><rect x="15" y="25.61" width="5" height="1.7" fill="#9cdcfe"/><rect x="22" y="25.61" width="1" height="1.7" fill="#9cdcfe"/><rect x="23" y="25.61" width="1" height="1.7" fill="#6a9955"/><rect x="26" y="25.61" width="2" height="1.7" fill="#6a9955"/><rect x="29" y="25.61" width="1" height="1.7" fill="#6a9955"/><rect x="31" y="25.61" width="2" height="1.7" fill="#6a9955"/><rect x="34" y="25.61" width="1" height="1.7" fill="#6a9955"/><rect x="36" y="25.61" width="5" height="1.7" fill="#6a9955"/><rect x="42" y="25.61" width="3" height="1.7" fill="#6a9955"/><rect x="46" y="25.61" width="4" height="1.7" fill="#6a9955"/><rect x="55" y="25.61" width="2" height="1.7" fill="#6a9955"/><rect x="59" y="25.61" width="1" height="1.7" fill="#6a9955"/><rect x="0" y="27.58" width="3" height="1.7" fill="#569cd6"/><rect x="4" y="27.58" width="8" height="1.7" fill="#dcdcaa"/><rect x="13" y="27.58" width="1" height="1.7" fill="#dcdcaa"/><rect x="15" y="27.58" width="2" height="1.7" fill="#9cdcfe"/><rect x="19" y="27.58" width="4" height="1.7" fill="#9cdcfe"/><rect x="23" y="27.58" width="2" height="1.7" fill="#6a9955"/><rect x="26" y="27.58" width="2" height="1.7" fill="#6a9955"/><rect x="30" y="27.58" width="3" height="1.7" fill="#6a9955"/><rect x="34" y="27.58" width="1" height="1.7" fill="#6a9955"/><rect x="37" y="27.58" width="2" height="1.7" fill="#6a9955"/><rect x="40" y="27.58" width="2" height="1.7" fill="#6a9955"/><rect x="43" y="27.58" width="3" height="1.7" fill="#6a9955"/><rect x="48" y="27.58" width="1" height="1.7" fill="#6a9955"/><rect x="50" y="27.58" width="3" height="1.7" fill="#6a9955"/><rect x="55" y="27.58" width="4" height="1.7" fill="#6a9955"/><rect x="60" y="27.58" width="1" height="1.7" fill="#6a9955"/><rect x="0" y="29.55" width="3" height="1.7" fill="#569cd6"/><rect x="4" y="29.55" width="10" height="1.7" fill="#dcdcaa"/><rect x="14" y="29.55" width="1" height="1.7" fill="#9cdcfe"/><rect x="16" y="29.55" width="5" height="1.7" fill="#9cdcfe"/><rect x="23" y="29.55" width="4" height="1.7" fill="#6a9955"/><rect x="28" y="29.55" width="5" height="1.7" fill="#6a9955"/><rect x="35" y="29.55" width="2" height="1.7" fill="#6a9955"/><rect x="38" y="29.55" width="3" height="1.7" fill="#6a9955"/><rect x="42" y="29.55" width="4" height="1.7" fill="#6a9955"/><rect x="47" y="29.55" width="3" height="1.7" fill="#6a9955"/><rect x="51" y="29.55" width="2" height="1.7" fill="#6a9955"/><rect x="54" y="29.55" width="1" height="1.7" fill="#6a9955"/><rect x="0" y="31.52" width="3" height="1.7" fill="#569cd6"/><rect x="5" y="31.52" width="4" height="1.7" fill="#dcdcaa"/><rect x="10" y="31.52" width="4" height="1.7" fill="#dcdcaa"/><rect x="15" y="31.52" width="1" height="1.7" fill="#9cdcfe"/><rect x="17" y="31.52" width="1" height="1.7" fill="#9cdcfe"/><rect x="19" y="31.52" width="2" height="1.7" fill="#9cdcfe"/><rect x="23" y="31.52" width="1" height="1.7" fill="#6a9955"/><rect x="25" y="31.52" width="4" height="1.7" fill="#6a9955"/><rect x="30" y="31.52" width="1" height="1.7" fill="#6a9955"/><rect x="35" y="31.52" width="8" height="1.7" fill="#6a9955"/><rect x="44" y="31.52" width="6" height="1.7" fill="#6a9955"/><rect x="51" y="31.52" width="3" height="1.7" fill="#6a9955"/><rect x="0" y="33.49" width="3" height="1.7" fill="#569cd6"/><rect x="4" y="33.49" width="8" height="1.7" fill="#dcdcaa"/><rect x="13" y="33.49" width="1" height="1.7" fill="#dcdcaa"/><rect x="14" y="33.49" width="5" height="1.7" fill="#9cdcfe"/><rect x="20" y="33.49" width="3" height="1.7" fill="#9cdcfe"/><rect x="23" y="33.49" width="7" height="1.7" fill="#6a9955"/><rect x="31" y="33.49" width="2" height="1.7" fill="#6a9955"/><rect x="35" y="33.49" width="2" height="1.7" fill="#6a9955"/><rect x="39" y="33.49" width="2" height="1.7" fill="#6a9955"/><rect x="42" y="33.49" width="1" height="1.7" fill="#6a9955"/><rect x="44" y="33.49" width="1" height="1.7" fill="#6a9955"/><rect x="46" y="33.49" width="1" height="1.7" fill="#6a9955"/><rect x="48" y="33.49" width="2" height="1.7" fill="#6a9955"/><rect x="52" y="33.49" width="7" height="1.7" fill="#6a9955"/><rect x="0" y="35.46" width="3" height="1.7" fill="#569cd6"/><rect x="4" y="35.46" width="10" height="1.7" fill="#dcdcaa"/><rect x="14" y="35.46" width="4" height="1.7" fill="#9cdcfe"/><rect x="19" y="35.46" width="3" height="1.7" fill="#9cdcfe"/><rect x="23" y="35.46" width="3" height="1.7" fill="#6a9955"/><rect x="29" y="35.46" width="4" height="1.7" fill="#6a9955"/><rect x="34" y="35.46" width="4" height="1.7" fill="#6a9955"/><rect x="39" y="35.46" width="1" height="1.7" fill="#6a9955"/><rect x="41" y="35.46" width="1" height="1.7" fill="#6a9955"/><rect x="44" y="35.46" width="1" height="1.7" fill="#6a9955"/><rect x="46" y="35.46" width="6" height="1.7" fill="#6a9955"/><rect x="53" y="35.46" width="1" height="1.7" fill="#6a9955"/><rect x="56" y="35.46" width="1" height="1.7" fill="#6a9955"/><rect x="58" y="35.46" width="1" height="1.7" fill="#6a9955"/><rect x="60" y="35.46" width="1" height="1.7" fill="#6a9955"/><rect x="4" y="37.43" width="3" height="1.7" fill="#dcdcaa"/><rect x="8" y="37.43" width="2" height="1.7" fill="#d4d4d4"/><rect x="0" y="39.40" width="3" height="1.7" fill="#569cd6"/><rect x="4" y="39.40" width="6" height="1.7" fill="#569cd6"/><rect x="0" y="41.37" width="1" height="1.7" fill="#d4d4d4"/><rect x="4" y="43.34" width="3" height="1.7" fill="#9cdcfe"/><rect x="8" y="43.34" width="7" height="1.7" fill="#9cdcfe"/><rect x="4" y="45.31" width="2" height="1.7" fill="#6a9955"/><rect x="7" y="45.31" width="6" height="1.7" fill="#6a9955"/><rect x="14" y="45.31" width="1" height="1.7" fill="#6a9955"/><rect x="16" y="45.31" width="10" height="1.7" fill="#6a9955"/><rect x="27" y="45.31" width="3" height="1.7" fill="#6a9955"/><rect x="34" y="45.31" width="8" height="1.7" fill="#6a9955"/><rect x="43" y="45.31" width="1" height="1.7" fill="#6a9955"/><rect x="45" y="45.31" width="1" height="1.7" fill="#6a9955"/><rect x="47" y="45.31" width="1" height="1.7" fill="#6a9955"/><rect x="49" y="45.31" width="1" height="1.7" fill="#6a9955"/><rect x="51" y="45.31" width="1" height="1.7" fill="#6a9955"/><rect x="53" y="45.31" width="1" height="1.7" fill="#6a9955"/><rect x="4" y="47.28" width="2" height="1.7" fill="#6a9955"/><rect x="7" y="47.28" width="12" height="1.7" fill="#6a9955"/><rect x="20" y="47.28" width="6" height="1.7" fill="#6a9955"/><rect x="27" y="47.28" width="9" height="1.7" fill="#6a9955"/><rect x="37" y="47.28" width="8" height="1.7" fill="#6a9955"/><rect x="4" y="49.25" width="2" height="1.7" fill="#6a9955"/><rect x="7" y="49.25" width="6" height="1.7" fill="#6a9955"/><rect x="14" y="49.25" width="1" height="1.7" fill="#6a9955"/><rect x="16" y="49.25" width="18" height="1.7" fill="#6a9955"/><rect x="35" y="49.25" width="8" height="1.7" fill="#6a9955"/><rect x="47" y="49.25" width="8" height="1.7" fill="#6a9955"/><rect x="56" y="49.25" width="1" height="1.7" fill="#6a9955"/><rect x="58" y="49.25" width="6" height="1.7" fill="#6a9955"/><rect x="4" y="51.22" width="2" height="1.7" fill="#6a9955"/><rect x="7" y="51.22" width="12" height="1.7" fill="#6a9955"/><rect x="20" y="51.22" width="6" height="1.7" fill="#6a9955"/><rect x="27" y="51.22" width="9" height="1.7" fill="#6a9955"/><rect x="37" y="51.22" width="8" height="1.7" fill="#6a9955"/><rect x="4" y="53.19" width="2" height="1.7" fill="#6a9955"/><rect x="7" y="53.19" width="6" height="1.7" fill="#6a9955"/><rect x="14" y="53.19" width="1" height="1.7" fill="#6a9955"/><rect x="16" y="53.19" width="12" height="1.7" fill="#6a9955"/><rect x="32" y="53.19" width="8" height="1.7" fill="#6a9955"/><rect x="41" y="53.19" width="1" height="1.7" fill="#6a9955"/><rect x="43" y="53.19" width="1" height="1.7" fill="#6a9955"/><rect x="45" y="53.19" width="1" height="1.7" fill="#6a9955"/><rect x="47" y="53.19" width="1" height="1.7" fill="#6a9955"/><rect x="4" y="55.16" width="2" height="1.7" fill="#6a9955"/><rect x="7" y="55.16" width="12" height="1.7" fill="#6a9955"/><rect x="20" y="55.16" width="6" height="1.7" fill="#6a9955"/><rect x="27" y="55.16" width="9" height="1.7" fill="#6a9955"/><rect x="37" y="55.16" width="8" height="1.7" fill="#6a9955"/><rect x="4" y="57.13" width="2" height="1.7" fill="#6a9955"/><rect x="7" y="57.13" width="6" height="1.7" fill="#6a9955"/><rect x="14" y="57.13" width="1" height="1.7" fill="#6a9955"/><rect x="16" y="57.13" width="12" height="1.7" fill="#6a9955"/><rect x="32" y="57.13" width="8" height="1.7" fill="#6a9955"/><rect x="41" y="57.13" width="1" height="1.7" fill="#6a9955"/><rect x="43" y="57.13" width="1" height="1.7" fill="#6a9955"/><rect x="4" y="61.07" width="2" height="1.7" fill="#6a9955"/><rect x="7" y="61.07" width="6" height="1.7" fill="#6a9955"/><rect x="14" y="61.07" width="1" height="1.7" fill="#6a9955"/><rect x="16" y="61.07" width="10" height="1.7" fill="#6a9955"/><rect x="27" y="61.07" width="3" height="1.7" fill="#6a9955"/><rect x="34" y="61.07" width="8" height="1.7" fill="#6a9955"/><rect x="43" y="61.07" width="1" height="1.7" fill="#6a9955"/><rect x="45" y="61.07" width="1" height="1.7" fill="#6a9955"/><rect x="47" y="61.07" width="1" height="1.7" fill="#6a9955"/><rect x="49" y="61.07" width="1" height="1.7" fill="#6a9955"/><rect x="51" y="61.07" width="1" height="1.7" fill="#6a9955"/><rect x="53" y="61.07" width="1" height="1.7" fill="#6a9955"/><rect x="55" y="61.07" width="1" height="1.7" fill="#6a9955"/><rect x="57" y="61.07" width="1" height="1.7" fill="#6a9955"/><rect x="59" y="61.07" width="1" height="1.7" fill="#6a9955"/><rect x="61" y="61.07" width="1" height="1.7" fill="#6a9955"/><rect x="4" y="63.04" width="2" height="1.7" fill="#6a9955"/><rect x="7" y="63.04" width="12" height="1.7" fill="#6a9955"/><rect x="20" y="63.04" width="6" height="1.7" fill="#6a9955"/><rect x="27" y="63.04" width="9" height="1.7" fill="#6a9955"/><rect x="37" y="63.04" width="8" height="1.7" fill="#6a9955"/><rect x="4" y="65.01" width="2" height="1.7" fill="#6a9955"/><rect x="7" y="65.01" width="6" height="1.7" fill="#6a9955"/><rect x="14" y="65.01" width="1" height="1.7" fill="#6a9955"/><rect x="16" y="65.01" width="15" height="1.7" fill="#6a9955"/><rect x="32" y="65.01" width="8" height="1.7" fill="#6a9955"/><rect x="44" y="65.01" width="8" height="1.7" fill="#6a9955"/><rect x="53" y="65.01" width="1" height="1.7" fill="#6a9955"/><rect x="55" y="65.01" width="10" height="1.7" fill="#6a9955"/><rect x="66" y="65.01" width="1" height="1.7" fill="#6a9955"/><rect x="68" y="65.01" width="6" height="1.7" fill="#6a9955"/><rect x="75" y="65.01" width="1" height="1.7" fill="#6a9955"/><rect x="77" y="65.01" width="6" height="1.7" fill="#6a9955"/><rect x="4" y="66.98" width="2" height="1.7" fill="#6a9955"/><rect x="7" y="66.98" width="12" height="1.7" fill="#6a9955"/><rect x="20" y="66.98" width="6" height="1.7" fill="#6a9955"/><rect x="27" y="66.98" width="9" height="1.7" fill="#6a9955"/><rect x="37" y="66.98" width="8" height="1.7" fill="#6a9955"/><rect x="4" y="68.95" width="2" height="1.7" fill="#6a9955"/><rect x="7" y="68.95" width="6" height="1.7" fill="#6a9955"/><rect x="14" y="68.95" width="1" height="1.7" fill="#6a9955"/><rect x="16" y="68.95" width="14" height="1.7" fill="#6a9955"/><rect x="34" y="68.95" width="8" height="1.7" fill="#6a9955"/><rect x="43" y="68.95" width="1" height="1.7" fill="#6a9955"/><rect x="45" y="68.95" width="1" height="1.7" fill="#6a9955"/><rect x="47" y="68.95" width="1" height="1.7" fill="#6a9955"/><rect x="49" y="68.95" width="3" height="1.7" fill="#6a9955"/><rect x="53" y="68.95" width="1" height="1.7" fill="#6a9955"/><rect x="55" y="68.95" width="3" height="1.7" fill="#6a9955"/><rect x="4" y="70.92" width="2" height="1.7" fill="#6a9955"/><rect x="7" y="70.92" width="12" height="1.7" fill="#6a9955"/><rect x="20" y="70.92" width="6" height="1.7" fill="#6a9955"/><rect x="27" y="70.92" width="9" height="1.7" fill="#6a9955"/><rect x="37" y="70.92" width="8" height="1.7" fill="#6a9955"/><rect x="4" y="72.89" width="2" height="1.7" fill="#6a9955"/><rect x="7" y="72.89" width="6" height="1.7" fill="#6a9955"/><rect x="14" y="72.89" width="1" height="1.7" fill="#6a9955"/><rect x="16" y="72.89" width="13" height="1.7" fill="#6a9955"/><rect x="30" y="72.89" width="3" height="1.7" fill="#6a9955"/><rect x="37" y="72.89" width="8" height="1.7" fill="#6a9955"/><rect x="46" y="72.89" width="1" height="1.7" fill="#6a9955"/><rect x="48" y="72.89" width="5" height="1.7" fill="#6a9955"/><rect x="54" y="72.89" width="1" height="1.7" fill="#6a9955"/><rect x="56" y="72.89" width="4" height="1.7" fill="#6a9955"/><rect x="61" y="72.89" width="2" height="1.7" fill="#6a9955"/><rect x="64" y="72.89" width="1" height="1.7" fill="#6a9955"/><rect x="66" y="72.89" width="4" height="1.7" fill="#6a9955"/><rect x="4" y="74.86" width="2" height="1.7" fill="#6a9955"/><rect x="7" y="74.86" width="12" height="1.7" fill="#6a9955"/><rect x="20" y="74.86" width="6" height="1.7" fill="#6a9955"/><rect x="27" y="74.86" width="9" height="1.7" fill="#6a9955"/><rect x="37" y="74.86" width="8" height="1.7" fill="#6a9955"/><rect x="4" y="78.80" width="2" height="1.7" fill="#6a9955"/><rect x="7" y="78.80" width="6" height="1.7" fill="#6a9955"/><rect x="14" y="78.80" width="1" height="1.7" fill="#6a9955"/><rect x="16" y="78.80" width="12" height="1.7" fill="#6a9955"/><rect x="32" y="78.80" width="8" height="1.7" fill="#6a9955"/><rect x="41" y="78.80" width="1" height="1.7" fill="#6a9955"/><rect x="43" y="78.80" width="1" height="1.7" fill="#6a9955"/><rect x="45" y="78.80" width="1" height="1.7" fill="#6a9955"/><rect x="47" y="78.80" width="1" height="1.7" fill="#6a9955"/><rect x="49" y="78.80" width="1" height="1.7" fill="#6a9955"/><rect x="51" y="78.80" width="4" height="1.7" fill="#6a9955"/><rect x="4" y="80.77" width="2" height="1.7" fill="#6a9955"/><rect x="7" y="80.77" width="12" height="1.7" fill="#6a9955"/><rect x="20" y="80.77" width="6" height="1.7" fill="#6a9955"/><rect x="27" y="80.77" width="9" height="1.7" fill="#6a9955"/><rect x="37" y="80.77" width="8" height="1.7" fill="#6a9955"/><rect x="4" y="82.74" width="2" height="1.7" fill="#6a9955"/><rect x="7" y="82.74" width="6" height="1.7" fill="#6a9955"/><rect x="14" y="82.74" width="1" height="1.7" fill="#6a9955"/><rect x="16" y="82.74" width="17" height="1.7" fill="#6a9955"/><rect x="37" y="82.74" width="8" height="1.7" fill="#6a9955"/><rect x="46" y="82.74" width="1" height="1.7" fill="#6a9955"/><rect x="48" y="82.74" width="4" height="1.7" fill="#6a9955"/><rect x="53" y="82.74" width="1" height="1.7" fill="#6a9955"/><rect x="55" y="82.74" width="6" height="1.7" fill="#6a9955"/><rect x="62" y="82.74" width="1" height="1.7" fill="#6a9955"/><rect x="64" y="82.74" width="4" height="1.7" fill="#6a9955"/><rect x="4" y="84.71" width="2" height="1.7" fill="#6a9955"/><rect x="7" y="84.71" width="12" height="1.7" fill="#6a9955"/><rect x="20" y="84.71" width="6" height="1.7" fill="#6a9955"/><rect x="27" y="84.71" width="9" height="1.7" fill="#6a9955"/><rect x="37" y="84.71" width="8" height="1.7" fill="#6a9955"/><rect x="4" y="86.68" width="2" height="1.7" fill="#6a9955"/><rect x="7" y="86.68" width="6" height="1.7" fill="#6a9955"/><rect x="14" y="86.68" width="1" height="1.7" fill="#6a9955"/><rect x="16" y="86.68" width="10" height="1.7" fill="#6a9955"/><rect x="27" y="86.68" width="3" height="1.7" fill="#6a9955"/><rect x="34" y="86.68" width="8" height="1.7" fill="#6a9955"/><rect x="43" y="86.68" width="1" height="1.7" fill="#6a9955"/><rect x="45" y="86.68" width="1" height="1.7" fill="#6a9955"/><rect x="47" y="86.68" width="1" height="1.7" fill="#6a9955"/><rect x="49" y="86.68" width="1" height="1.7" fill="#6a9955"/><rect x="51" y="86.68" width="1" height="1.7" fill="#6a9955"/><rect x="53" y="86.68" width="1" height="1.7" fill="#6a9955"/><rect x="4" y="88.65" width="2" height="1.7" fill="#6a9955"/><rect x="7" y="88.65" width="12" height="1.7" fill="#6a9955"/><rect x="20" y="88.65" width="6" height="1.7" fill="#6a9955"/><rect x="27" y="88.65" width="9" height="1.7" fill="#6a9955"/><rect x="37" y="88.65" width="8" height="1.7" fill="#6a9955"/><rect x="4" y="90.62" width="2" height="1.7" fill="#6a9955"/><rect x="7" y="90.62" width="6" height="1.7" fill="#6a9955"/><rect x="14" y="90.62" width="1" height="1.7" fill="#6a9955"/><rect x="16" y="90.62" width="10" height="1.7" fill="#6a9955"/><rect x="27" y="90.62" width="3" height="1.7" fill="#6a9955"/><rect x="34" y="90.62" width="8" height="1.7" fill="#6a9955"/><rect x="43" y="90.62" width="1" height="1.7" fill="#6a9955"/><rect x="45" y="90.62" width="1" height="1.7" fill="#6a9955"/><rect x="47" y="90.62" width="1" height="1.7" fill="#6a9955"/><rect x="49" y="90.62" width="1" height="1.7" fill="#6a9955"/><rect x="51" y="90.62" width="1" height="1.7" fill="#6a9955"/><rect x="53" y="90.62" width="1" height="1.7" fill="#6a9955"/><rect x="4" y="92.59" width="2" height="1.7" fill="#6a9955"/><rect x="7" y="92.59" width="12" height="1.7" fill="#6a9955"/><rect x="20" y="92.59" width="6" height="1.7" fill="#6a9955"/><rect x="27" y="92.59" width="9" height="1.7" fill="#6a9955"/><rect x="37" y="92.59" width="8" height="1.7" fill="#6a9955"/><rect x="4" y="96.53" width="2" height="1.7" fill="#6a9955"/><rect x="7" y="96.53" width="6" height="1.7" fill="#6a9955"/><rect x="14" y="96.53" width="1" height="1.7" fill="#6a9955"/><rect x="16" y="96.53" width="16" height="1.7" fill="#6a9955"/><rect x="36" y="96.53" width="8" height="1.7" fill="#6a9955"/><rect x="45" y="96.53" width="1" height="1.7" fill="#6a9955"/><rect x="47" y="96.53" width="6" height="1.7" fill="#6a9955"/><rect x="54" y="96.53" width="1" height="1.7" fill="#6a9955"/><rect x="56" y="96.53" width="6" height="1.7" fill="#6a9955"/><rect x="63" y="96.53" width="1" height="1.7" fill="#6a9955"/><rect x="65" y="96.53" width="1" height="1.7" fill="#6a9955"/><rect x="4" y="98.50" width="2" height="1.7" fill="#6a9955"/><rect x="7" y="98.50" width="12" height="1.7" fill="#6a9955"/><rect x="20" y="98.50" width="6" height="1.7" fill="#6a9955"/><rect x="27" y="98.50" width="9" height="1.7" fill="#6a9955"/><rect x="37" y="98.50" width="8" height="1.7" fill="#6a9955"/><rect x="4" y="100.47" width="2" height="1.7" fill="#6a9955"/><rect x="7" y="100.47" width="6" height="1.7" fill="#6a9955"/><rect x="14" y="100.47" width="1" height="1.7" fill="#6a9955"/><rect x="16" y="100.47" width="14" height="1.7" fill="#6a9955"/><rect x="31" y="100.47" width="8" height="1.7" fill="#6a9955"/><rect x="43" y="100.47" width="8" height="1.7" fill="#6a9955"/><rect x="52" y="100.47" width="1" height="1.7" fill="#6a9955"/><rect x="54" y="100.47" width="6" height="1.7" fill="#6a9955"/><rect x="61" y="100.47" width="1" height="1.7" fill="#6a9955"/><rect x="63" y="100.47" width="6" height="1.7" fill="#6a9955"/><rect x="70" y="100.47" width="1" height="1.7" fill="#6a9955"/><rect x="72" y="100.47" width="6" height="1.7" fill="#6a9955"/><rect x="4" y="102.44" width="2" height="1.7" fill="#6a9955"/><rect x="7" y="102.44" width="12" height="1.7" fill="#6a9955"/><rect x="20" y="102.44" width="6" height="1.7" fill="#6a9955"/><rect x="27" y="102.44" width="9" height="1.7" fill="#6a9955"/><rect x="37" y="102.44" width="8" height="1.7" fill="#6a9955"/><rect x="4" y="106.38" width="2" height="1.7" fill="#6a9955"/><rect x="7" y="106.38" width="6" height="1.7" fill="#6a9955"/><rect x="14" y="106.38" width="1" height="1.7" fill="#6a9955"/><rect x="16" y="106.38" width="15" height="1.7" fill="#6a9955"/><rect x="35" y="106.38" width="8" height="1.7" fill="#6a9955"/><rect x="44" y="106.38" width="1" height="1.7" fill="#6a9955"/><rect x="46" y="106.38" width="4" height="1.7" fill="#6a9955"/><rect x="51" y="106.38" width="1" height="1.7" fill="#6a9955"/><rect x="53" y="106.38" width="4" height="1.7" fill="#6a9955"/><rect x="58" y="106.38" width="1" height="1.7" fill="#6a9955"/><rect x="60" y="106.38" width="1" height="1.7" fill="#6a9955"/><rect x="4" y="108.35" width="2" height="1.7" fill="#6a9955"/><rect x="7" y="108.35" width="12" height="1.7" fill="#6a9955"/><rect x="20" y="108.35" width="6" height="1.7" fill="#6a9955"/><rect x="27" y="108.35" width="9" height="1.7" fill="#6a9955"/><rect x="37" y="108.35" width="8" height="1.7" fill="#6a9955"/><rect x="4" y="110.32" width="2" height="1.7" fill="#6a9955"/><rect x="7" y="110.32" width="6" height="1.7" fill="#6a9955"/><rect x="14" y="110.32" width="1" height="1.7" fill="#6a9955"/><rect x="16" y="110.32" width="15" height="1.7" fill="#6a9955"/><rect x="32" y="110.32" width="8" height="1.7" fill="#6a9955"/><rect x="44" y="110.32" width="8" height="1.7" fill="#6a9955"/><rect x="53" y="110.32" width="1" height="1.7" fill="#6a9955"/><rect x="55" y="110.32" width="1" height="1.7" fill="#6a9955"/><rect x="57" y="110.32" width="1" height="1.7" fill="#6a9955"/><rect x="59" y="110.32" width="6" height="1.7" fill="#6a9955"/><rect x="66" y="110.32" width="1" height="1.7" fill="#6a9955"/><rect x="68" y="110.32" width="6" height="1.7" fill="#6a9955"/><rect x="4" y="112.29" width="2" height="1.7" fill="#6a9955"/><rect x="7" y="112.29" width="12" height="1.7" fill="#6a9955"/><rect x="20" y="112.29" width="6" height="1.7" fill="#6a9955"/><rect x="27" y="112.29" width="9" height="1.7" fill="#6a9955"/><rect x="37" y="112.29" width="8" height="1.7" fill="#6a9955"/><rect x="4" y="116.23" width="2" height="1.7" fill="#6a9955"/><rect x="7" y="116.23" width="6" height="1.7" fill="#6a9955"/><rect x="14" y="116.23" width="1" height="1.7" fill="#6a9955"/><rect x="16" y="116.23" width="17" height="1.7" fill="#6a9955"/><rect x="37" y="116.23" width="8" height="1.7" fill="#6a9955"/><rect x="46" y="116.23" width="1" height="1.7" fill="#6a9955"/><rect x="48" y="116.23" width="7" height="1.7" fill="#6a9955"/><rect x="56" y="116.23" width="1" height="1.7" fill="#6a9955"/><rect x="58" y="116.23" width="6" height="1.7" fill="#6a9955"/><rect x="65" y="116.23" width="2" height="1.7" fill="#6a9955"/><rect x="68" y="116.23" width="1" height="1.7" fill="#6a9955"/><rect x="4" y="118.20" width="2" height="1.7" fill="#6a9955"/><rect x="7" y="118.20" width="12" height="1.7" fill="#6a9955"/><rect x="20" y="118.20" width="6" height="1.7" fill="#6a9955"/><rect x="27" y="118.20" width="9" height="1.7" fill="#6a9955"/><rect x="37" y="118.20" width="8" height="1.7" fill="#6a9955"/><rect x="4" y="120.17" width="2" height="1.7" fill="#6a9955"/><rect x="7" y="120.17" width="6" height="1.7" fill="#6a9955"/><rect x="14" y="120.17" width="1" height="1.7" fill="#6a9955"/><rect x="16" y="120.17" width="19" height="1.7" fill="#6a9955"/><rect x="36" y="120.17" width="4" height="1.7" fill="#6a9955"/><rect x="44" y="120.17" width="8" height="1.7" fill="#6a9955"/><rect x="53" y="120.17" width="1" height="1.7" fill="#6a9955"/><rect x="55" y="120.17" width="1" height="1.7" fill="#6a9955"/><rect x="57" y="120.17" width="1" height="1.7" fill="#6a9955"/><rect x="59" y="120.17" width="10" height="1.7" fill="#6a9955"/><rect x="70" y="120.17" width="2" height="1.7" fill="#6a9955"/><rect x="73" y="120.17" width="2" height="1.7" fill="#6a9955"/><rect x="4" y="122.14" width="2" height="1.7" fill="#6a9955"/><rect x="7" y="122.14" width="12" height="1.7" fill="#6a9955"/><rect x="20" y="122.14" width="6" height="1.7" fill="#6a9955"/><rect x="27" y="122.14" width="9" height="1.7" fill="#6a9955"/><rect x="37" y="122.14" width="8" height="1.7" fill="#6a9955"/><rect x="4" y="126.08" width="6" height="1.7" fill="#9cdcfe"/><rect x="11" y="126.08" width="1" height="1.7" fill="#d4d4d4"/><rect x="13" y="126.08" width="8" height="1.7" fill="#dcdcaa"/><rect x="21" y="126.08" width="1" height="1.7" fill="#d4d4d4"/><rect x="22" y="126.08" width="6" height="1.7" fill="#b5cea8"/><rect x="28" y="126.08" width="2" height="1.7" fill="#d4d4d4"/><rect x="34" y="126.08" width="8" height="1.7" fill="#6a9955"/><rect x="43" y="126.08" width="1" height="1.7" fill="#6a9955"/><rect x="45" y="126.08" width="4" height="1.7" fill="#6a9955"/><rect x="50" y="126.08" width="1" height="1.7" fill="#6a9955"/><rect x="52" y="126.08" width="6" height="1.7" fill="#6a9955"/><rect x="59" y="126.08" width="2" height="1.7" fill="#6a9955"/><rect x="62" y="126.08" width="1" height="1.7" fill="#6a9955"/><rect x="4" y="128.05" width="6" height="1.7" fill="#dcdcaa"/><rect x="10" y="128.05" width="1" height="1.7" fill="#d4d4d4"/><rect x="11" y="128.05" width="5" height="1.7" fill="#ce9178"/><rect x="17" y="128.05" width="6" height="1.7" fill="#ce9178"/><rect x="24" y="128.05" width="3" height="1.7" fill="#ce9178"/><rect x="27" y="128.05" width="2" height="1.7" fill="#9cdcfe"/><rect x="29" y="128.05" width="2" height="1.7" fill="#d7ba7d"/><rect x="31" y="128.05" width="1" height="1.7" fill="#ce9178"/><rect x="32" y="128.05" width="1" height="1.7" fill="#d4d4d4"/><rect x="34" y="128.05" width="6" height="1.7" fill="#9cdcfe"/><rect x="40" y="128.05" width="2" height="1.7" fill="#d4d4d4"/><rect x="4" y="130.02" width="6" height="1.7" fill="#9cdcfe"/><rect x="11" y="130.02" width="1" height="1.7" fill="#d4d4d4"/><rect x="13" y="130.02" width="7" height="1.7" fill="#dcdcaa"/><rect x="20" y="130.02" width="1" height="1.7" fill="#d4d4d4"/><rect x="21" y="130.02" width="10" height="1.7" fill="#b5cea8"/><rect x="31" y="130.02" width="1" height="1.7" fill="#d4d4d4"/><rect x="33" y="130.02" width="2" height="1.7" fill="#b5cea8"/><rect x="35" y="130.02" width="2" height="1.7" fill="#d4d4d4"/><rect x="41" y="130.02" width="8" height="1.7" fill="#6a9955"/><rect x="50" y="130.02" width="1" height="1.7" fill="#6a9955"/><rect x="52" y="130.02" width="6" height="1.7" fill="#6a9955"/><rect x="59" y="130.02" width="1" height="1.7" fill="#6a9955"/><rect x="61" y="130.02" width="10" height="1.7" fill="#6a9955"/><rect x="72" y="130.02" width="2" height="1.7" fill="#6a9955"/><rect x="75" y="130.02" width="2" height="1.7" fill="#6a9955"/><rect x="4" y="131.99" width="6" height="1.7" fill="#dcdcaa"/><rect x="10" y="131.99" width="1" height="1.7" fill="#d4d4d4"/><rect x="11" y="131.99" width="5" height="1.7" fill="#ce9178"/><rect x="17" y="131.99" width="6" height="1.7" fill="#ce9178"/><rect x="24" y="131.99" width="3" height="1.7" fill="#ce9178"/><rect x="27" y="131.99" width="2" height="1.7" fill="#9cdcfe"/><rect x="29" y="131.99" width="2" height="1.7" fill="#d7ba7d"/><rect x="31" y="131.99" width="1" height="1.7" fill="#ce9178"/><rect x="32" y="131.99" width="1" height="1.7" fill="#d4d4d4"/><rect x="34" y="131.99" width="6" height="1.7" fill="#9cdcfe"/><rect x="40" y="131.99" width="2" height="1.7" fill="#d4d4d4"/><rect x="4" y="133.96" width="6" height="1.7" fill="#c586c0"/><rect x="11" y="133.96" width="1" height="1.7" fill="#b5cea8"/><rect x="12" y="133.96" width="1" height="1.7" fill="#d4d4d4"/><rect x="0" y="135.93" width="1" height="1.7" fill="#d4d4d4"/></g></svg>
<div class="a ui nw" style="left:555px;top:715px;font-size:11px;line-height:14px;color:#969696">问题</div>
<div class="a ui nw" style="left:600px;top:715px;font-size:11px;line-height:14px;color:#969696">输出</div>
<div class="a ui nw" style="left:647px;top:715px;font-size:11px;line-height:14px;color:#969696">调试控制台</div>
<div class="a ui nw" style="left:724px;top:715px;font-size:11px;line-height:14px;color:#e7e7e7">终端</div>
<div class="a" style="left:722px;top:732px;width:26px;height:1px;background:#e7e7e7"></div>
<svg class="a" style="left:1823.5px;top:715.5px" width="14" height="14"><path d="M7 0.5v13M0.5 7h13" stroke="#d8d8d8" stroke-width="0.9"/></svg>
<svg class="a" style="left:1842px;top:720.5px" width="10" height="6"><path d="M0.8 0.8L5 4.8L9.2 0.8" fill="none" stroke="#c5c5c5" stroke-width="1.1"/></svg>
<svg class="a" style="left:1864px;top:718px" width="11" height="7"><path d="M0.8 6L5.5 1.2L10.2 6" fill="none" stroke="#c5c5c5" stroke-width="1.1"/></svg>
<svg class="a" style="left:1886px;top:717px" width="10" height="10"><path d="M0.8 0.8L9.2 9.2M9.2 0.8L0.8 9.2" stroke="#c5c5c5" stroke-width="1.1"/></svg>
<div class="a" style="left:1710px;top:738px;width:1px;height:248px;background:#414141"></div>
<div class="a" style="left:1711px;top:761px;width:199px;height:22px;background:#37373d"></div>
<svg class="a" style="left:1721px;top:743px" width="15" height="15"><path d="M1 1h13v13H1z" fill="none" stroke="#cccccc" stroke-width="1"/><path d="M5 4.5L8 7.5L5 10.5" fill="none" stroke="#cccccc" stroke-width="1"/></svg>
<div class="a ui nw" style="left:1740px;top:742px;font-size:13px;line-height:16px;color:#cccccc">bash</div>
<svg class="a" style="left:1721.5px;top:765.5px" width="15" height="15"><path d="M1.5 1.5L3 1l4.5 4.5-1.5 1.5L1.5 3z M8 8.5l1.5-1.5 4 4-.5 2-1 .5-2-.5z" fill="#cccccc"/><path d="M2.5 12.5L8.5 6.5" stroke="#cccccc" stroke-width="2.2" stroke-linecap="round"/><path d="M8 5.5A3.2 3.2 0 0 1 12.8 2.2L10.8 4.2 11.8 5.2 13.8 3.2A3.2 3.2 0 0 1 9.5 7" fill="#cccccc" stroke="#cccccc" stroke-width="0.8"/></svg>
<div class="a ui nw" style="left:1740px;top:764.5px;font-size:12px;line-height:16px;color:#cccccc">Run RISCV-QEMU</div>
<div class="a ui nw" style="left:1849px;top:765px;font-size:12px;line-height:15px;color:#9d9d9d">Task</div>
<svg class="a" style="left:1885px;top:765px" width="14" height="13"><path d="M1 7L5 11L13 1.5" fill="none" stroke="#a0a0a0" stroke-width="1.1"/></svg>
<div class="a mono nw" style="left:556px;top:748.90px;font-size:13.21px;line-height:16px;color:#cccccc;">CC -[M] <span style="display:inline-block;width:15.85px">正</span><span style="display:inline-block;width:15.85px">在</span><span style="display:inline-block;width:15.85px">构</span><span style="display:inline-block;width:15.85px">建</span>... main.elf</div>
<div class="a mono nw" style="left:556px;top:764.68px;font-size:13.21px;line-height:16px;color:#cccccc;">CC -[M] <span style="display:inline-block;width:15.85px">正</span><span style="display:inline-block;width:15.85px">在</span><span style="display:inline-block;width:15.85px">构</span><span style="display:inline-block;width:15.85px">建</span>... addsub.o</div>
<div class="a mono nw" style="left:556px;top:780.46px;font-size:13.21px;line-height:16px;color:#cccccc;">CC -[M] <span style="display:inline-block;width:15.85px">正</span><span style="display:inline-block;width:15.85px">在</span><span style="display:inline-block;width:15.85px">构</span><span style="display:inline-block;width:15.85px">建</span>... sll.o</div>
<div class="a mono nw" style="left:556px;top:796.24px;font-size:13.21px;line-height:16px;color:#cccccc;">CC -[M] <span style="display:inline-block;width:15.85px">正</span><span style="display:inline-block;width:15.85px">在</span><span style="display:inline-block;width:15.85px">构</span><span style="display:inline-block;width:15.85px">建</span>... and.o</div>
<div class="a mono nw" style="left:556px;top:812.02px;font-size:13.21px;line-height:16px;color:#cccccc;">CC -[M] <span style="display:inline-block;width:15.85px">正</span><span style="display:inline-block;width:15.85px">在</span><span style="display:inline-block;width:15.85px">构</span><span style="display:inline-block;width:15.85px">建</span>... addi.o</div>
<div class="a mono nw" style="left:556px;top:827.80px;font-size:13.21px;line-height:16px;color:#cccccc;">CC -[M] <span style="display:inline-block;width:15.85px">正</span><span style="display:inline-block;width:15.85px">在</span><span style="display:inline-block;width:15.85px">构</span><span style="display:inline-block;width:15.85px">建</span>... slti.o</div>
<div class="a mono nw" style="left:556px;top:843.58px;font-size:13.21px;line-height:16px;color:#cccccc;">CC -[M] <span style="display:inline-block;width:15.85px">正</span><span style="display:inline-block;width:15.85px">在</span><span style="display:inline-block;width:15.85px">构</span><span style="display:inline-block;width:15.85px">建</span>... main.o</div>
<div class="a mono nw" style="left:556px;top:875.14px;font-size:13.21px;line-height:16px;color:#cccccc;font-weight:bold;-webkit-text-stroke:0;"><span style="display:inline-block;width:15.85px">终</span><span style="display:inline-block;width:15.85px">端</span><span style="display:inline-block;width:15.85px">将</span><span style="display:inline-block;width:15.85px">被</span><span style="display:inline-block;width:15.85px">任</span><span style="display:inline-block;width:15.85px">务</span><span style="display:inline-block;width:15.85px">重</span><span style="display:inline-block;width:15.85px">用</span><span style="display:inline-block;width:15.85px">，</span><span style="display:inline-block;width:15.85px">按</span><span style="display:inline-block;width:15.85px">任</span><span style="display:inline-block;width:15.85px">意</span><span style="display:inline-block;width:15.85px">键</span><span style="display:inline-block;width:15.85px">关</span><span style="display:inline-block;width:15.85px">闭</span><span style="display:inline-block;width:15.85px">。</span></div>
<div class="a mono nw" style="left:556px;top:906.70px;font-size:13.21px;line-height:16px;color:#cccccc;font-weight:bold;-webkit-text-stroke:0;">&gt; Executing task: echo Starting RISCV-QEMU&amp;qemu-riscv32 -g 1234 ./*.elf &lt;</div>
<div class="a mono nw" style="left:556px;top:938.26px;font-size:13.21px;line-height:16px;color:#cccccc;">Starting RISCV-QEMU</div>
<div class="a mono nw" style="left:556px;top:954.04px;font-size:13.21px;line-height:16px;color:#cccccc;">This result is:ff</div>
<div class="a" style="left:535px;top:565px;width:711px;height:45px;border:2.5px solid #e8174a"></div>
<div class="a" style="left:536px;top:944px;width:714px;height:27px;border:2.5px solid #e8174a"></div>
<svg class="a" style="left:19px;top:990px" width="14" height="14"><path d="M2 5.5L5.5 9L2 12.5 M12 1.5L8.5 5L12 8.5" fill="none" stroke="#ffffff" stroke-width="1.2"/></svg>
<svg class="a" style="left:51px;top:990px" width="13" height="13"><circle cx="6.5" cy="6.5" r="5.6" fill="none" stroke="#fff" stroke-width="1"/><path d="M4.3 4.3L8.7 8.7M8.7 4.3L4.3 8.7" stroke="#fff" stroke-width="1"/></svg>
<div class="a ui nw" style="left:67px;top:990.5px;font-size:12px;line-height:15px;color:#fff">0</div>
<svg class="a" style="left:78px;top:990px" width="13" height="13"><path d="M6.5 1L12.3 12H0.7Z M6.5 5v4 M6.5 10v1" fill="none" stroke="#fff" stroke-width="1"/></svg>
<div class="a ui nw" style="left:93px;top:990.5px;font-size:12px;line-height:15px;color:#fff">0</div>
<svg class="a" style="left:116px;top:990px" width="15" height="15"><path d="M1.5 1.5L3 1l4.5 4.5-1.5 1.5L1.5 3z M8 8.5l1.5-1.5 4 4-.5 2-1 .5-2-.5z" fill="#fff"/><path d="M2.5 12.5L8.5 6.5" stroke="#fff" stroke-width="2.2" stroke-linecap="round"/><path d="M8 5.5A3.2 3.2 0 0 1 12.8 2.2L10.8 4.2 11.8 5.2 13.8 3.2A3.2 3.2 0 0 1 9.5 7" fill="#fff" stroke="#fff" stroke-width="0.8"/></svg>
<div class="a ui nw" style="left:132px;top:990.5px;font-size:12px;line-height:15px;color:#fff">1</div>
<svg class="a" style="left:154px;top:990px" width="16" height="14"><path d="M6 2L13.5 7L6 12Z" fill="none" stroke="#fff" stroke-width="1"/><path d="M2.5 8.5h4v4.5h-4z" fill="none" stroke="#fff" stroke-width="1"/></svg>
<div class="a ui nw" style="left:172px;top:990.5px;font-size:12px;line-height:15px;color:#fff">(gdb) 启动 (16)</div>
<div class="a ui nw" style="left:1576px;top:990.5px;font-size:12px;line-height:15px;color:#fff">行 67，列 1</div>
<div class="a ui nw" style="left:1652px;top:990.5px;font-size:12px;line-height:15px;color:#fff">空格: 4</div>
<div class="a ui nw" style="left:1705px;top:990.5px;font-size:12px;line-height:15px;color:#fff">UTF-8</div>
<div class="a ui nw" style="left:1753px;top:990.5px;font-size:12px;line-height:15px;color:#fff">LF</div>
<div class="a ui nw" style="left:1781px;top:990.5px;font-size:12px;line-height:15px;color:#fff">C</div>
<div class="a ui nw" style="left:1805px;top:990.5px;font-size:12px;line-height:15px;color:#fff">Linux</div>
<svg class="a" style="left:1851px;top:990px" width="15" height="14"><circle cx="7" cy="4.5" r="3" fill="none" stroke="#fff" stroke-width="1"/><path d="M1.5 13C2 9.5 4 8 7 8s5 1.5 5.5 5" fill="none" stroke="#fff" stroke-width="1"/></svg>
<svg class="a" style="left:1881px;top:989px" width="15" height="15"><path d="M3 11V7a4.5 4.5 0 0 1 9 0v4l1.3 1.3H1.7z M6 13.5h3" fill="none" stroke="#fff" stroke-width="1"/><circle cx="12" cy="3.5" r="2.3" fill="#fff"/></svg>
<svg class="a" style="left:21px;top:85px" width="24" height="26"><path d="M8.5 1.5h7l4.5 4.5v11h-11.5z M15.5 1.5v4.5h4.5" fill="none" stroke="#858585" stroke-width="1.4" stroke-linejoin="round"/><path d="M8.5 7H3v17h11.5v-6.5" fill="none" stroke="#858585" stroke-width="1.4" stroke-linejoin="round"/></svg>
<svg class="a" style="left:21px;top:130px" width="26" height="28"><circle cx="16" cy="11" r="7.5" fill="none" stroke="#858585" stroke-width="1.5"/><path d="M10.5 16.5L2.5 25.5" stroke="#858585" stroke-width="1.6"/></svg>
<svg class="a" style="left:21px;top:178px" width="24" height="28"><circle cx="7" cy="5.5" r="3" fill="none" stroke="#858585" stroke-width="1.4"/><circle cx="7" cy="22" r="3" fill="none" stroke="#858585" stroke-width="1.4"/><circle cx="17.5" cy="10.5" r="3" fill="none" stroke="#858585" stroke-width="1.4"/><path d="M7 8.5v10.5 M17.5 13.5c0 4-4 5-9.5 6.5" fill="none" stroke="#858585" stroke-width="1.4"/></svg>
<svg class="a" style="left:20px;top:226px" width="28" height="28"><path d="M19 16L25.5 12L9.5 3.2V12.5" fill="none" stroke="#ffffff" stroke-width="1.5" stroke-linejoin="miter"/><ellipse cx="7.8" cy="20.8" rx="3.6" ry="4.6" fill="none" stroke="#ffffff" stroke-width="1.5"/><path d="M5.5 16.5h4.6 M2.5 17.5l2 1.2M2.5 24.5l2-1.2M13 17.5l-2 1.2M13 24.5l-2-1.2M2 21h2M11.5 21h2" stroke="#ffffff" stroke-width="1.3"/></svg>
<div class="a" style="left:34px;top:240px;width:15px;height:15px;border-radius:50%;background:#0078d4"></div>
<div class="a ui nw" style="left:34px;top:241px;width:15px;text-align:center;font-size:9px;line-height:13px;color:#fff;font-weight:bold">1</div>
<svg class="a" style="left:21px;top:275px" width="26" height="26"><path d="M1.5 8.5h8v8h-8z M1.5 16.5h8v8h-8z M9.5 16.5h8v8h-8z M13.5 2h8.5v8.5h-8.5z" fill="none" stroke="#858585" stroke-width="1.4" stroke-linejoin="round"/></svg>
<svg class="a" style="left:21px;top:323px" width="26" height="26"><path d="M17.5 12V2H1.5v15.5h10 M6 21.5h5" fill="none" stroke="#858585" stroke-width="1.4"/><circle cx="17.5" cy="18.5" r="5.5" fill="#333" stroke="#858585" stroke-width="1.4"/><path d="M15.5 16.5l4 4M19.5 16.5l-4 4" stroke="#858585" stroke-width="1"/></svg>
<svg class="a" style="left:21px;top:903px" width="26" height="26"><circle cx="12.5" cy="12.5" r="11" fill="none" stroke="#858585" stroke-width="1.4"/><circle cx="12.5" cy="9.5" r="4.3" fill="none" stroke="#858585" stroke-width="1.4"/><path d="M5 20c1.5-3.5 4-5 7.5-5s6 1.5 7.5 5" fill="none" stroke="#858585" stroke-width="1.4"/></svg>
<svg class="a" style="left:20px;top:950px" width="26" height="26"><circle cx="12" cy="12" r="3" fill="none" stroke="#858585" stroke-width="1.4"/><path d="M12 1.5l1.8 2.4 2.9-.9.6 3 2.8 1-.9 2.9 2.1 2.1-2.1 2.1.9 2.9-2.8 1-.6 3-2.9-.9L12 22.5l-1.8-2.4-2.9.9-.6-3-2.8-1 .9-2.9L2.7 12l2.1-2.1-.9-2.9 2.8-1 .6-3 2.9.9z" fill="none" stroke="#858585" stroke-width="1.4" stroke-linejoin="round"/></svg>
<div class="a" style="left:34px;top:962px;width:15px;height:15px;border-radius:50%;background:#0078d4"></div>
<div class="a ui nw" style="left:34px;top:963px;width:15px;text-align:center;font-size:9px;line-height:13px;color:#fff;font-weight:bold">1</div></body></html>
